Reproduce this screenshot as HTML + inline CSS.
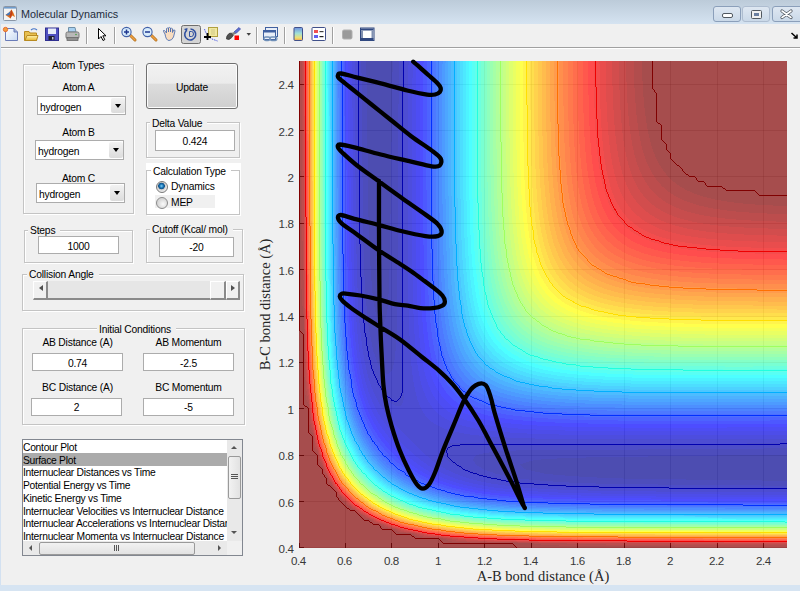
<!DOCTYPE html>
<html><head><meta charset="utf-8">
<style>
*{box-sizing:border-box}
html,body{margin:0;padding:0}
body{width:800px;height:591px;position:relative;overflow:hidden;background:#f0f0f0;font-family:"Liberation Sans",sans-serif;color:#000}
.a{position:absolute}
#title{left:0;top:0;width:800px;height:24px;background:linear-gradient(#d3e1f1,#cbdcef 60%,#c6d9ee)}
#ttext{left:21px;top:7.5px;font-size:10.8px;color:#1e2b3b;white-space:nowrap}
#tool{left:1px;top:24px;width:799px;height:23px;background:#f0f0f0}
#sep1{left:1px;top:47px;width:799px;height:1px;background:#a0a0a0}
#sep2{left:1px;top:48px;width:799px;height:1px;background:#ffffff}
#lb{left:0;top:24px;width:1px;height:567px;background:#d3e1f1}
#bb{left:0;top:585px;width:800px;height:6px;background:#d6e4f2}
.grp{position:absolute;border:1px solid #d5dfe5;box-shadow:inset 1px 1px 0 #fff, 1px 1px 0 #fff}
.grp{border-color:#c4c4c4}
.gt{position:absolute;background:#f0f0f0;font-size:10.3px;letter-spacing:-0.2px;white-space:nowrap;padding:0 5px 0 2px;line-height:11px}
.lbl{position:absolute;font-size:10.3px;letter-spacing:-0.2px;white-space:nowrap;line-height:11px;text-align:center}
.edit{padding-top:1px;position:absolute;background:#fff;border:1px solid #acacac;border-top-color:#acacac;font-size:10.3px;letter-spacing:-0.2px;text-align:center;line-height:15px}
.pop{position:absolute;background:#fff;border:1px solid #acacac;font-size:10.3px;letter-spacing:-0.2px;line-height:19px;padding-left:2px;padding-top:1px}
.pop .arr{position:absolute;right:0px;top:1px;bottom:1px;width:14px;border-radius:2px;background:linear-gradient(#f2f2f2,#dcdcdc)}
.pop .arr:after{content:"";position:absolute;left:3.5px;top:6px;border-left:3.5px solid transparent;border-right:3.5px solid transparent;border-top:4px solid #000}
.tick{position:absolute;font-size:11.6px;letter-spacing:-0.4px;color:#383838;white-space:nowrap;line-height:11px}
</style></head><body>
<div id="title" class="a"></div>

<div id="tool" class="a"></div>
<div id="sep1" class="a"></div><div id="sep2" class="a"></div>
<div id="lb" class="a"></div>
<svg class="a" style="left:0;top:0" width="800" height="50">
<defs>
<linearGradient id="tg" x1="0" y1="0" x2="0" y2="1"><stop offset="0" stop-color="#bccbd9"/><stop offset="1" stop-color="#d5e3f1"/></linearGradient>
<linearGradient id="bg1" x1="0" y1="0" x2="0" y2="1"><stop offset="0" stop-color="#dfe8f2"/><stop offset="1" stop-color="#c9d8e8"/></linearGradient>
<linearGradient id="cb" x1="0" y1="0" x2="0" y2="1"><stop offset="0" stop-color="#6f8fe0"/><stop offset="0.45" stop-color="#9fe0d8"/><stop offset="0.8" stop-color="#f0e070"/><stop offset="1" stop-color="#f0a050"/></linearGradient>
<linearGradient id="pg" x1="0" y1="0" x2="1" y2="1"><stop offset="0" stop-color="#ffffff"/><stop offset="1" stop-color="#c8daf2"/></linearGradient>
<linearGradient id="fg" x1="0" y1="0" x2="0" y2="1"><stop offset="0" stop-color="#fff2b0"/><stop offset="1" stop-color="#e6b830"/></linearGradient>
</defs>
<rect x="0" y="0" width="800" height="24" fill="url(#tg)"/>
<!-- matlab icon -->
<rect x="3.5" y="6.5" width="13" height="14" rx="1" fill="#f4f4f4" stroke="#8a96a6"/>
<rect x="4" y="7" width="12" height="1.6" fill="#6f9ccc"/>
<path d="M5.5 15 L9 12.5 L11.5 9.5 L13.5 13 L15 17 L12 15.5 L10.5 18.5 Z" fill="#e0701c"/>
<path d="M5.5 15 L9 12.5 L10.5 11 L9.5 15.5 Z" fill="#3c78c0"/>
<path d="M11.5 9.5 L12.5 13.5 L10.5 18.5 L9.5 15.5 Z" fill="#c0401a"/>
<!-- window buttons -->
<rect x="713.5" y="6.5" width="27" height="15" rx="2.5" fill="url(#bg1)" stroke="#8b9fba"/>
<rect x="742.5" y="6.5" width="27" height="15" rx="2.5" fill="url(#bg1)" stroke="#aebdd0"/>
<rect x="772.5" y="6.5" width="30" height="15" rx="2.5" fill="url(#bg1)" stroke="#8b9fba"/>
<rect x="722.5" y="13.5" width="10" height="4" rx="1.5" fill="#fff" stroke="#505860"/>
<rect x="751.5" y="10.5" width="10" height="8" rx="1" fill="#f0f0f0" stroke="#505860"/>
<rect x="754" y="13" width="5" height="3" fill="#6a7fa0"/>
<path d="M782 11 L791 17.5 M791 11 L782 17.5" stroke="#505860" stroke-width="3.2" stroke-linecap="round"/>
<path d="M782 11 L791 17.5 M791 11 L782 17.5" stroke="#fff" stroke-width="1.6" stroke-linecap="round"/>
<!-- toolbar separators -->
<g fill="#a0a0a0"><rect x="86" y="27" width="1" height="17"/><rect x="114" y="27" width="1" height="17"/><rect x="256" y="27" width="1" height="17"/><rect x="284" y="27" width="1" height="17"/><rect x="332" y="27" width="1" height="17"/></g>
<g fill="#ffffff"><rect x="87" y="27" width="1" height="17"/><rect x="115" y="27" width="1" height="17"/><rect x="257" y="27" width="1" height="17"/><rect x="285" y="27" width="1" height="17"/><rect x="333" y="27" width="1" height="17"/></g>
<!-- new -->
<path d="M5.5 28.5 H14 L17.5 32 V40.5 H5.5 Z" fill="url(#pg)" stroke="#6a7cb8"/>
<path d="M14 28.5 V32 H17.5" fill="#9fb0d8" stroke="#6a7cb8"/>
<circle cx="5.5" cy="29.5" r="2.2" fill="#f0a040" stroke="#e85a20" stroke-width="0.8"/>
<!-- open -->
<path d="M24.5 31.5 H29 L30 33 H36.5 V40.5 H24.5 Z" fill="#e8c050" stroke="#b88a20"/>
<path d="M25 40.5 L27 35.5 H38 L36.5 40.5 Z" fill="url(#fg)" stroke="#b88a20"/>
<path d="M31 30 Q34 27.5 37 30" fill="none" stroke="#4a78c8" stroke-width="1.2"/>
<!-- save -->
<rect x="45.5" y="28" width="13" height="12.5" fill="#5050c0" stroke="#303090"/>
<rect x="48" y="28.5" width="8" height="5.5" fill="#e8ecf8"/>
<rect x="48.5" y="36" width="6" height="4" fill="#202030"/>
<rect x="52" y="37" width="1.5" height="2.5" fill="#c0c0d0"/>
<!-- print -->
<path d="M68.5 27.5 H75 L76 32 H68.5 Z" fill="#a8d0f0" stroke="#7090a8"/>
<rect x="66" y="32" width="13" height="6.5" rx="1.5" fill="#b8b8b8" stroke="#787878"/>
<rect x="67" y="37.5" width="11" height="3" fill="#909090" stroke="#686868" stroke-width="0.8"/>
<circle cx="76" cy="34.5" r="0.8" fill="#40a040"/>
<!-- pointer -->
<path d="M98.5 28.5 V39 L101 36.5 L103 40.5 L104.8 39.6 L102.8 35.8 H106 Z" fill="#fff" stroke="#000" stroke-width="1"/>
<!-- zoom in/out -->
<g>
<line x1="130.5" y1="35.5" x2="135" y2="40" stroke="#b07020" stroke-width="3" stroke-linecap="round"/>
<line x1="130.5" y1="35.5" x2="135" y2="40" stroke="#f0a040" stroke-width="1.6" stroke-linecap="round"/>
<circle cx="126.5" cy="32" r="4.6" fill="#d8ecfc" stroke="#4060a8" stroke-width="1.1"/>
<path d="M124 32 H129 M126.5 29.5 V34.5" stroke="#203890" stroke-width="1.5"/>
<line x1="151.5" y1="35.5" x2="156" y2="40" stroke="#b07020" stroke-width="3" stroke-linecap="round"/>
<line x1="151.5" y1="35.5" x2="156" y2="40" stroke="#f0a040" stroke-width="1.6" stroke-linecap="round"/>
<circle cx="147.5" cy="32" r="4.6" fill="#d8ecfc" stroke="#4060a8" stroke-width="1.1"/>
<path d="M145 32 H150" stroke="#203890" stroke-width="1.5"/>
</g>
<!-- hand -->
<path d="M165 34 L163.5 31.5 Q163 30 164.5 30.5 L166.5 33 V28.5 Q167.5 27.5 168.5 28.5 V32 V27.8 Q169.5 27 170.5 28 V32 V28.5 Q171.5 27.8 172.5 28.8 V32.5 L173.5 30 Q175 29.5 175 31 L173.5 37 Q172 40.5 169 40.5 Q166 40.5 165 34 Z" fill="#f8dcc0" stroke="#5070b0" stroke-width="0.9"/>
<!-- rotate pressed -->
<rect x="181.5" y="25.5" width="19" height="18" rx="2" fill="#d4d4d4" stroke="#6e6e6e"/>
<path d="M186 31 A5.5 5.5 0 1 0 190.5 29" fill="none" stroke="#3050a0" stroke-width="1.6"/>
<path d="M184 29 L187.5 28 L187 32 Z" fill="#3050a0"/>
<path d="M189.5 31.5 H191.5 Q193.5 31.5 193.5 34 Q193.5 36.5 191.5 36.5 H189.5 Z" fill="none" stroke="#3050a0" stroke-width="1"/>
<!-- data cursor -->
<rect x="208.5" y="27.5" width="9" height="9" fill="#f0e8a0" stroke="#b0a040"/>
<path d="M211 30 H215 M211 32 H215 M211 34 H215" stroke="#c8c080" stroke-width="0.8"/>
<path d="M204.5 29 Q206 35 212 39 L217.5 41" fill="none" stroke="#4050e0" stroke-width="1" stroke-dasharray="1.5 1"/>
<path d="M207.5 33 V40 M204 37 H211" stroke="#000" stroke-width="1.8"/>
<!-- brush -->
<path d="M234 32 L239 27.5 L240.5 29 L236 33.5 Z" fill="#6070d0" stroke="#3040a0" stroke-width="0.7"/>
<path d="M226.5 39 Q226 36 229 33.5 L231.5 33 L233.5 35 Q232 38 229 39.5 Z" fill="#505050" stroke="#303030" stroke-width="0.7"/>
<path d="M231.5 33 L234 32 L236 33.5 L233.5 35 Z" fill="#808080"/>
<rect x="234.5" y="35.5" width="4.5" height="4.5" fill="#ff0000"/>
<path d="M246.5 33 H251 L248.75 35.8 Z" fill="#404040"/>
<!-- link -->
<rect x="265.5" y="27.5" width="12" height="9" fill="#e8eef8" stroke="#4060a0"/>
<rect x="263.5" y="30.5" width="12" height="9" fill="#e8eef8" stroke="#4060a0"/>
<rect x="263.5" y="30.5" width="12" height="2" fill="#4060a0"/>
<rect x="264" y="37" width="6" height="3.5" rx="1.7" fill="none" stroke="#7090b8" stroke-width="1.3"/>
<rect x="270" y="37" width="7" height="3.5" rx="1.7" fill="none" stroke="#7090b8" stroke-width="1.3"/>
<!-- colorbar -->
<rect x="294" y="27.5" width="8.5" height="13" rx="1" fill="url(#cb)" stroke="#40508a"/>
<!-- legend -->
<rect x="312" y="27.5" width="13.5" height="13" rx="1" fill="#fff" stroke="#40508a"/>
<rect x="314" y="30" width="4" height="3" fill="#f05050"/><rect x="314" y="35" width="4" height="3" fill="#6060f0"/>
<rect x="319.5" y="31" width="4" height="1.2" fill="#404040"/><rect x="319.5" y="36" width="4" height="1.2" fill="#202020"/>
<!-- gray square -->
<rect x="342.5" y="30" width="9.5" height="9" rx="1.5" fill="#9a9a9a" stroke="#b0b0b0"/>
<!-- plot tools -->
<rect x="360.5" y="28" width="13.5" height="12.5" fill="#fff" stroke="#304880" stroke-width="1"/>
<rect x="361" y="28.5" width="12.5" height="2" fill="#304880"/>
<rect x="361" y="38" width="12.5" height="2" fill="#304880"/>
<rect x="361" y="30.5" width="2" height="7.5" fill="#8090b0"/><rect x="371.5" y="30.5" width="2" height="7.5" fill="#8090b0"/>
<!-- dock arrow -->
<path d="M791.5 33 L797 38 M797 34.5 V38 H793.5" fill="none" stroke="#000" stroke-width="1.5"/>
</svg>
<div id="ttext" class="a">Molecular Dynamics</div>


<!-- Atom types group -->
<div class="grp" style="left:23px;top:64px;width:111px;height:150px"></div>
<div class="gt" style="left:50px;top:60px">Atom Types</div>
<div class="lbl" style="left:23px;top:82px;width:111px">Atom A</div>
<div class="pop" style="left:37px;top:96px;width:89px;height:19px">hydrogen<div class="arr"></div></div>
<div class="lbl" style="left:23px;top:127px;width:111px">Atom B</div>
<div class="pop" style="left:35px;top:140px;width:89px;height:20px">hydrogen<div class="arr"></div></div>
<div class="lbl" style="left:23px;top:173px;width:111px">Atom C</div>
<div class="pop" style="left:36px;top:183px;width:89px;height:20px">hydrogen<div class="arr"></div></div>

<!-- Update button -->
<div class="a" style="left:146px;top:63px;width:92px;height:46px;border:1px solid #707070;border-radius:3px;background:linear-gradient(#f2f2f2,#ebebeb 44%,#dddddd 45%,#cfcfcf);box-shadow:inset 0 0 0 1px #fcfcfc"></div>
<div class="lbl" style="left:146px;top:82px;width:92px">Update</div>

<!-- Delta value -->
<div class="grp" style="left:146px;top:122px;width:94px;height:36px"></div>
<div class="gt" style="left:150px;top:118px">Delta Value</div>
<div class="edit" style="left:155px;top:130px;width:80px;height:21px;line-height:19px">0.424</div>

<!-- Calculation type -->
<div class="a" style="left:146px;top:163px;width:95px;height:52px;background:#fff"></div>
<div class="grp" style="left:146px;top:170px;width:94px;height:45px"></div>
<div class="gt" style="left:151px;top:166px;background:#fff">Calculation Type</div>
<div class="a" style="left:155px;top:195px;width:60px;height:13px;background:#f0f0f0"></div>
<div class="a" style="left:156px;top:181px;width:12px;height:12px;border-radius:50%;border:1px solid #7a7a7a;background:radial-gradient(circle at 45% 40%,#7fd0f8 0,#1e78b8 1.8px,#0c4f86 3px,#c8c8c8 3.6px,#e8e8e8 5px)"></div>
<div class="lbl" style="left:171px;top:181px;text-align:left">Dynamics</div>
<div class="a" style="left:156px;top:197px;width:12px;height:12px;border-radius:50%;border:1px solid #8a8a8a;background:radial-gradient(circle at 60% 60%,#fafafa 0,#d8d8d8 5px)"></div>
<div class="lbl" style="left:171px;top:197px;text-align:left">MEP</div>

<!-- Steps -->
<div class="grp" style="left:24px;top:230px;width:109px;height:33px"></div>
<div class="gt" style="left:28px;top:225px">Steps</div>
<div class="edit" style="padding-top:2px;left:38px;top:236px;width:81px;height:18px;line-height:16px">1000</div>

<!-- Cutoff -->
<div class="grp" style="left:146px;top:229px;width:97px;height:34px"></div>
<div class="gt" style="left:150px;top:224px">Cutoff (Kcal/ mol)</div>
<div class="edit" style="left:159px;top:237px;width:75px;height:20px;line-height:18px">-20</div>

<!-- Collision angle -->
<div class="grp" style="left:22px;top:274px;width:222px;height:37px"></div>
<div class="gt" style="left:27px;top:269px">Collision Angle</div>
<div class="a" style="left:33px;top:281px;width:207px;height:19px;background:#e6e6e6;border-bottom:2px solid #8a8a8a"></div>
<div class="a" style="left:33px;top:281px;width:15px;height:19px;background:#f0f0f0;border-left:1px solid #fff;border-top:1px solid #fff;border-right:2px solid #8a8a8a;border-bottom:2px solid #8a8a8a"></div>
<div class="a" style="left:38.5px;top:285px;border-top:3.5px solid transparent;border-bottom:3.5px solid transparent;border-right:4px solid #505050"></div>
<div class="a" style="left:210px;top:281px;width:16px;height:19px;background:#f0f0f0;border-left:1px solid #fff;border-top:1px solid #fff;border-right:2px solid #8a8a8a;border-bottom:2px solid #8a8a8a"></div>
<div class="a" style="left:226px;top:281px;width:14px;height:19px;background:#f0f0f0;border-left:1px solid #fff;border-top:1px solid #fff;border-right:2px solid #8a8a8a;border-bottom:2px solid #8a8a8a"></div>
<div class="a" style="left:231px;top:285px;border-top:3.5px solid transparent;border-bottom:3.5px solid transparent;border-left:4px solid #505050"></div>

<!-- Initial conditions -->
<div class="grp" style="left:22px;top:328px;width:223px;height:97px"></div>
<div class="gt" style="left:97px;top:324px">Initial Conditions</div>
<div class="lbl" style="left:32px;top:337px;width:91px">AB Distance (A)</div>
<div class="edit" style="padding-top:2px;left:32px;top:353px;width:91px;height:18px;line-height:16px">0.74</div>
<div class="lbl" style="left:32px;top:382px;width:91px">BC Distance (A)</div>
<div class="edit" style="left:31px;top:398px;width:91px;height:18px;line-height:16px">2</div>
<div class="lbl" style="left:143px;top:337px;width:91px">AB Momentum</div>
<div class="edit" style="padding-top:2px;left:143px;top:353px;width:91px;height:18px;line-height:16px">-2.5</div>
<div class="lbl" style="left:143px;top:382px;width:91px">BC Momentum</div>
<div class="edit" style="left:143px;top:398px;width:91px;height:18px;line-height:16px">-5</div>

<!-- listbox -->
<div class="a" style="left:22px;top:439px;width:221px;height:117px;background:#fff;border:1px solid #828790;overflow:hidden">
<div class="a" style="left:0;top:13px;width:204px;height:13px;background:#ababab"></div>
<div class="a" style="left:0px;top:2px;width:204px;font-size:10.3px;letter-spacing:-0.28px;line-height:12.7px;white-space:nowrap;overflow:hidden">Contour Plot<br>Surface Plot<br>Internuclear Distances vs Time<br>Potential Energy vs Time<br>Kinetic Energy vs Time<br>Internuclear Velocities vs Internuclear Distance<br>Internuclear Accelerations vs Internuclear Distance<br>Internuclear Momenta vs Internuclear Distance</div>
<div class="a" style="left:204px;top:0;width:15px;height:101px;background:#e9e9e9"></div>
<div class="a" style="left:205px;top:16px;width:13px;height:43px;border:1px solid #9a9a9a;border-radius:2px;background:linear-gradient(90deg,#f2f2f2,#e2e2e2)"></div>
<div class="a" style="left:208px;top:34px;width:7px;height:1px;background:#555;box-shadow:0 2px 0 #555,0 4px 0 #555"></div>
<div class="a" style="left:208px;top:6px;border-left:3px solid transparent;border-right:3px solid transparent;border-bottom:3px solid #555"></div>
<div class="a" style="left:208px;top:91px;border-left:3px solid transparent;border-right:3px solid transparent;border-top:3px solid #555"></div>
<div class="a" style="left:0;top:101px;width:204px;height:15px;background:#e9e9e9"></div>
<div class="a" style="left:16px;top:102px;width:156px;height:13px;border:1px solid #9a9a9a;border-radius:2px;background:linear-gradient(#f2f2f2,#e2e2e2)"></div>
<div class="a" style="left:91px;top:105px;width:1px;height:6px;background:#555;box-shadow:2px 0 0 #555,4px 0 0 #555"></div>
<div class="a" style="left:6px;top:105px;border-top:3px solid transparent;border-bottom:3px solid transparent;border-right:3px solid #555"></div>
<div class="a" style="left:195px;top:105px;border-top:3px solid transparent;border-bottom:3px solid transparent;border-left:3px solid #555"></div>
<div class="a" style="left:204px;top:101px;width:15px;height:15px;background:#f0f0f0"></div>
</div>
<!-- axis labels -->
<div class="tick" style="left:291px;top:555px">0.4</div>
<div class="tick" style="left:337px;top:555px">0.6</div>
<div class="tick" style="left:384px;top:555px">0.8</div>
<div class="tick" style="left:435px;top:555px">1</div>
<div class="tick" style="left:477px;top:555px">1.2</div>
<div class="tick" style="left:523px;top:555px">1.4</div>
<div class="tick" style="left:570px;top:555px">1.6</div>
<div class="tick" style="left:616px;top:555px">1.8</div>
<div class="tick" style="left:667px;top:555px">2</div>
<div class="tick" style="left:709px;top:555px">2.2</div>
<div class="tick" style="left:756px;top:555px">2.4</div>
<div class="tick" style="left:243.5px;width:50px;text-align:right;top:542.9px">0.4</div>
<div class="tick" style="left:243.5px;width:50px;text-align:right;top:496.5px">0.6</div>
<div class="tick" style="left:243.5px;width:50px;text-align:right;top:450.1px">0.8</div>
<div class="tick" style="left:243.5px;width:50px;text-align:right;top:403.8px">1</div>
<div class="tick" style="left:243.5px;width:50px;text-align:right;top:357.4px">1.2</div>
<div class="tick" style="left:243.5px;width:50px;text-align:right;top:311.0px">1.4</div>
<div class="tick" style="left:243.5px;width:50px;text-align:right;top:264.6px">1.6</div>
<div class="tick" style="left:243.5px;width:50px;text-align:right;top:218.2px">1.8</div>
<div class="tick" style="left:243.5px;width:50px;text-align:right;top:171.9px">2</div>
<div class="tick" style="left:243.5px;width:50px;text-align:right;top:125.5px">2.2</div>
<div class="tick" style="left:243.5px;width:50px;text-align:right;top:79.1px">2.4</div>

<div class="a" style="left:299px;top:568px;width:488px;text-align:center;font-family:'Liberation Serif',serif;font-size:14.5px;color:#262626;white-space:nowrap">A-B bond distance (&#197;)</div>
<div class="a" style="left:199px;top:296px;width:210px;text-align:center;font-family:'Liberation Serif',serif;font-size:14.5px;color:#262626;white-space:nowrap;transform:rotate(-90deg);transform-origin:50% 50%;left:160px">B-C bond distance (&#197;)</div>

<svg class="a" id="fb" style="left:299px;top:61px" width="488" height="487" shape-rendering="crispEdges"><path fill="#b43c3c" d="M0 0h6v6h-6zM0 6h6v6h-6zM0 12h6v6h-6zM0 18h6v6h-6zM0 24h6v6h-6zM0 30h6v6h-6zM0 36h6v6h-6zM0 42h6v6h-6zM0 48h6v6h-6zM0 54h6v6h-6zM0 60h6v6h-6zM0 72h6v6h-6zM0 78h6v6h-6zM0 84h6v6h-6zM0 90h6v6h-6zM0 96h6v6h-6zM0 102h6v6h-6zM0 108h6v6h-6zM0 120h6v6h-6zM0 126h6v6h-6zM0 132h6v6h-6zM0 138h6v6h-6zM0 144h6v6h-6zM0 150h6v6h-6zM0 156h6v6h-6zM0 168h6v6h-6zM0 174h6v6h-6zM0 180h6v6h-6zM0 186h6v6h-6zM0 192h6v6h-6zM0 198h6v6h-6zM12 378h6v6h-6zM18 396h6v6h-6zM102 468h6v6h-6zM132 474h12v6h-12z"/><path fill="#fc6030" d="M6 0h6v6h-6zM6 6h6v6h-6zM6 12h6v6h-6zM6 18h6v6h-6zM6 24h6v6h-6zM6 30h6v6h-6zM6 36h6v6h-6zM6 42h6v6h-6zM6 48h6v6h-6zM6 54h6v6h-6zM6 60h6v6h-6zM6 66h6v6h-6zM6 72h6v6h-6zM6 78h6v6h-6zM6 84h6v6h-6zM6 90h6v6h-6zM6 96h6v6h-6zM6 102h6v6h-6zM6 108h6v6h-6zM6 114h6v6h-6zM6 120h6v6h-6zM6 126h6v6h-6zM6 132h6v6h-6zM6 138h6v6h-6zM6 144h6v6h-6zM6 150h6v6h-6zM6 156h6v6h-6zM6 162h6v6h-6zM6 168h6v6h-6zM6 174h6v6h-6zM6 180h6v6h-6zM6 186h6v6h-6zM6 192h6v6h-6zM6 198h6v6h-6zM12 336h6v6h-6zM222 474h30v6h-30z"/><path fill="#fce448" d="M12 0h6v6h-6zM228 0h6v6h-6zM12 6h6v6h-6zM228 6h6v6h-6zM12 12h6v6h-6zM228 12h6v6h-6zM12 18h6v6h-6zM228 18h6v6h-6zM12 24h6v6h-6zM228 24h6v6h-6zM12 30h6v6h-6zM228 30h6v6h-6zM12 36h6v6h-6zM228 36h6v6h-6zM12 42h6v6h-6zM228 42h6v6h-6zM12 48h6v6h-6zM12 54h6v6h-6zM12 60h6v6h-6zM12 66h6v6h-6zM12 72h6v6h-6zM12 78h6v6h-6zM12 84h6v6h-6zM12 90h6v6h-6zM12 96h6v6h-6zM12 102h6v6h-6zM12 108h6v6h-6zM12 114h6v6h-6zM12 120h6v6h-6zM12 126h6v6h-6zM12 132h6v6h-6zM12 138h6v6h-6zM12 144h6v6h-6zM12 150h6v6h-6zM234 150h6v6h-6zM12 156h6v6h-6zM234 156h6v6h-6zM234 162h6v6h-6zM234 168h6v6h-6zM240 186h6v6h-6zM240 192h6v6h-6zM246 204h6v6h-6zM246 210h6v6h-6zM252 216h6v6h-6zM258 222h6v6h-6zM264 228h6v6h-6zM270 234h12v6h-12zM282 240h18v6h-18zM306 246h18v6h-18zM372 252h116v6h-116zM18 330h6v6h-6zM24 366h6v6h-6zM54 426h6v6h-6zM144 462h6v6h-6zM234 468h48v6h-48z"/><path fill="#a8fc90" d="M18 0h6v6h-6zM18 6h6v6h-6zM18 12h6v6h-6zM18 18h6v6h-6zM18 24h6v6h-6zM18 30h6v6h-6zM18 36h6v6h-6zM18 42h6v6h-6zM18 48h6v6h-6zM18 54h6v6h-6zM18 60h6v6h-6zM18 66h6v6h-6zM18 72h6v6h-6zM18 78h6v6h-6zM18 84h6v6h-6zM18 90h6v6h-6zM18 96h6v6h-6zM18 102h6v6h-6zM18 108h6v6h-6zM18 114h6v6h-6zM18 120h6v6h-6zM18 126h6v6h-6zM18 132h6v6h-6zM18 138h6v6h-6zM198 138h6v6h-6zM198 144h6v6h-6zM198 150h6v6h-6zM24 324h6v6h-6zM30 360h6v6h-6zM240 462h24v6h-24z"/><path fill="#54fcf0" d="M24 0h6v6h-6zM24 6h6v6h-6zM24 12h6v6h-6zM24 24h6v6h-6zM24 30h6v6h-6zM24 36h6v6h-6zM24 42h6v6h-6zM24 48h6v6h-6zM24 54h6v6h-6zM24 60h6v6h-6zM24 72h6v6h-6zM24 78h6v6h-6zM24 84h6v6h-6zM24 90h6v6h-6zM24 96h6v6h-6zM24 102h6v6h-6zM24 108h6v6h-6zM24 120h6v6h-6zM24 126h6v6h-6zM174 132h6v6h-6zM174 138h6v6h-6zM174 144h6v6h-6zM174 150h6v6h-6zM174 156h6v6h-6zM174 162h6v6h-6zM174 168h6v6h-6zM174 174h6v6h-6zM174 180h6v6h-6zM174 186h6v6h-6zM174 192h6v6h-6zM180 222h6v6h-6zM180 228h6v6h-6zM180 234h6v6h-6zM186 246h6v6h-6zM186 252h6v6h-6zM192 264h6v6h-6zM198 276h6v6h-6zM204 282h6v6h-6zM228 294h6v6h-6zM240 300h6v6h-6zM252 300h6v6h-6zM276 306h12v6h-12zM294 306h18v6h-18zM30 318h6v6h-6zM48 384h6v6h-6zM54 396h6v6h-6zM84 426h6v6h-6zM126 444h6v6h-6zM156 450h6v6h-6zM246 456h30v6h-30zM282 456h30v6h-30z"/><path fill="#3cc0fc" d="M30 0h6v6h-6zM30 6h6v6h-6zM30 12h6v6h-6zM30 18h6v6h-6zM30 24h6v6h-6zM30 30h6v6h-6zM30 36h6v6h-6zM30 42h6v6h-6zM30 48h6v6h-6zM30 54h6v6h-6zM30 60h6v6h-6zM30 66h6v6h-6zM156 180h6v6h-6zM156 186h6v6h-6zM156 192h6v6h-6zM156 198h6v6h-6zM156 204h6v6h-6zM156 210h6v6h-6zM156 216h6v6h-6zM156 222h6v6h-6zM156 228h6v6h-6zM162 252h6v6h-6zM162 258h6v6h-6zM162 264h6v6h-6zM168 276h6v6h-6zM174 288h6v6h-6zM36 306h6v6h-6zM192 306h6v6h-6zM36 312h6v6h-6zM204 312h6v6h-6zM216 318h18v6h-18zM240 324h42v6h-42zM42 342h6v6h-6zM48 366h6v6h-6zM54 378h6v6h-6zM60 390h6v6h-6zM66 396h6v6h-6zM90 420h6v6h-6zM102 426h6v6h-6zM114 432h6v6h-6zM132 438h6v6h-6zM162 444h12v6h-12zM264 450h132v6h-132z"/><path fill="#4890fc" d="M36 0h6v6h-6zM138 0h6v6h-6zM36 6h6v6h-6zM138 6h6v6h-6zM36 12h6v6h-6zM138 12h6v6h-6zM36 18h6v6h-6zM138 18h6v6h-6zM36 24h6v6h-6zM138 24h6v6h-6zM36 30h6v6h-6zM138 30h6v6h-6zM36 36h6v6h-6zM138 36h6v6h-6zM36 42h6v6h-6zM138 42h6v6h-6zM36 48h6v6h-6zM138 48h6v6h-6zM36 54h6v6h-6zM138 54h6v6h-6zM36 60h6v6h-6zM138 60h6v6h-6zM36 66h6v6h-6zM138 66h6v6h-6zM36 72h6v6h-6zM138 72h6v6h-6zM36 78h6v6h-6zM138 78h6v6h-6zM36 84h6v6h-6zM138 84h6v6h-6zM36 90h6v6h-6zM138 90h6v6h-6zM36 96h6v6h-6zM138 96h6v6h-6zM36 102h6v6h-6zM138 102h6v6h-6zM36 108h6v6h-6zM138 108h6v6h-6zM36 114h6v6h-6zM138 114h6v6h-6zM36 120h6v6h-6zM138 120h6v6h-6zM36 126h6v6h-6zM138 126h6v6h-6zM36 132h6v6h-6zM138 132h6v6h-6zM36 138h6v6h-6zM138 138h6v6h-6zM36 144h6v6h-6zM36 150h6v6h-6zM36 156h6v6h-6zM36 162h6v6h-6zM36 168h6v6h-6zM36 174h6v6h-6zM36 180h6v6h-6zM36 186h6v6h-6zM36 192h6v6h-6zM144 234h6v6h-6zM144 240h6v6h-6zM144 246h6v6h-6zM144 252h6v6h-6zM144 258h6v6h-6zM150 276h6v6h-6zM150 282h6v6h-6zM156 294h6v6h-6zM42 306h6v6h-6zM162 306h6v6h-6zM42 312h6v6h-6zM168 312h6v6h-6zM174 318h6v6h-6zM180 324h12v6h-12zM192 330h18v6h-18zM48 336h6v6h-6zM216 336h24v6h-24zM48 342h6v6h-6zM282 342h206v6h-206zM54 360h6v6h-6zM60 372h6v6h-6zM66 384h6v6h-6zM72 390h6v6h-6zM90 408h6v6h-6zM96 414h6v6h-6zM108 420h6v6h-6zM120 426h6v6h-6zM138 432h6v6h-6zM162 438h12v6h-12zM240 444h66v6h-66z"/><path fill="#3c54fc" d="M42 0h6v6h-6zM42 6h6v6h-6zM42 12h6v6h-6zM42 18h6v6h-6zM42 24h6v6h-6zM42 30h6v6h-6zM42 36h6v6h-6zM42 42h6v6h-6zM42 48h6v6h-6zM42 54h6v6h-6zM42 60h6v6h-6zM42 66h6v6h-6zM42 72h6v6h-6zM42 78h6v6h-6zM42 84h6v6h-6zM42 90h6v6h-6zM42 96h6v6h-6zM42 102h6v6h-6zM42 108h6v6h-6zM42 114h6v6h-6zM42 120h6v6h-6zM42 126h6v6h-6zM42 132h6v6h-6zM42 138h6v6h-6zM42 144h6v6h-6zM42 150h6v6h-6zM42 156h6v6h-6zM42 162h6v6h-6zM48 294h6v6h-6zM48 300h6v6h-6zM180 432h6v6h-6zM252 438h162v6h-162z"/><path fill="#4848f0" d="M48 0h6v6h-6zM114 0h6v6h-6zM48 6h6v6h-6zM114 6h6v6h-6zM48 12h6v6h-6zM114 12h6v6h-6zM48 18h6v6h-6zM114 18h6v6h-6zM48 24h6v6h-6zM114 24h6v6h-6zM48 30h6v6h-6zM114 30h6v6h-6zM48 36h6v6h-6zM114 36h6v6h-6zM48 42h6v6h-6zM114 42h6v6h-6zM48 48h6v6h-6zM114 48h6v6h-6zM48 54h6v6h-6zM114 54h6v6h-6zM48 60h6v6h-6zM114 60h6v6h-6zM48 66h6v6h-6zM114 66h6v6h-6zM48 72h6v6h-6zM114 72h6v6h-6zM48 78h6v6h-6zM114 78h6v6h-6zM48 84h6v6h-6zM114 84h6v6h-6zM48 90h6v6h-6zM114 90h6v6h-6zM48 96h6v6h-6zM114 96h6v6h-6zM48 102h6v6h-6zM114 102h6v6h-6zM48 108h6v6h-6zM114 108h6v6h-6zM48 114h6v6h-6zM114 114h6v6h-6zM48 120h6v6h-6zM114 120h6v6h-6zM48 126h6v6h-6zM114 126h6v6h-6zM48 132h6v6h-6zM114 132h6v6h-6zM48 138h6v6h-6zM114 138h6v6h-6zM48 144h6v6h-6zM114 144h6v6h-6zM48 150h6v6h-6zM114 150h6v6h-6zM48 156h6v6h-6zM114 156h6v6h-6zM48 162h6v6h-6zM114 162h6v6h-6zM48 168h6v6h-6zM114 168h6v6h-6zM48 174h6v6h-6zM114 174h6v6h-6zM48 180h6v6h-6zM114 180h6v6h-6zM48 186h6v6h-6zM114 186h6v6h-6zM48 192h6v6h-6zM114 192h6v6h-6zM48 198h6v6h-6zM114 198h6v6h-6zM48 204h6v6h-6zM114 204h6v6h-6zM114 210h6v6h-6zM114 216h6v6h-6zM114 222h6v6h-6zM114 228h6v6h-6zM114 234h6v6h-6zM114 240h6v6h-6zM114 246h6v6h-6zM54 276h6v6h-6zM120 276h6v6h-6zM54 282h6v6h-6zM120 282h6v6h-6zM54 288h6v6h-6zM120 288h6v6h-6zM54 294h6v6h-6zM120 294h6v6h-6zM120 300h6v6h-6zM120 306h6v6h-6zM60 312h6v6h-6zM126 312h6v6h-6zM60 318h6v6h-6zM126 318h6v6h-6zM60 324h6v6h-6zM126 324h12v6h-12zM132 330h6v6h-6zM66 336h6v6h-6zM132 336h12v6h-12zM66 342h6v6h-6zM144 342h6v6h-6zM72 348h6v6h-6zM144 348h18v6h-18zM72 354h6v6h-6zM156 354h18v6h-18zM78 360h6v6h-6zM174 360h24v6h-24zM78 366h12v6h-12zM210 366h278v6h-278zM84 372h6v6h-6zM90 378h6v6h-6zM96 384h6v6h-6zM102 390h6v6h-6zM108 396h6v6h-6zM114 402h12v6h-12zM126 408h12v6h-12zM138 414h12v6h-12zM156 420h12v6h-12zM180 426h24v6h-24zM246 432h120v6h-120zM372 432h42v6h-42z"/><path fill="#3c3ccc" d="M54 0h6v6h-6zM102 0h6v6h-6zM54 6h6v6h-6zM102 6h6v6h-6zM54 12h6v6h-6zM102 12h6v6h-6zM54 18h6v6h-6zM102 18h6v6h-6zM54 24h6v6h-6zM102 24h6v6h-6zM54 30h6v6h-6zM102 30h6v6h-6zM54 36h6v6h-6zM102 36h6v6h-6zM54 42h6v6h-6zM102 42h6v6h-6zM54 48h6v6h-6zM102 48h6v6h-6zM54 54h6v6h-6zM102 54h6v6h-6zM54 60h6v6h-6zM102 60h6v6h-6zM54 66h6v6h-6zM102 66h6v6h-6zM54 72h6v6h-6zM102 72h6v6h-6zM54 78h6v6h-6zM102 78h6v6h-6zM54 84h6v6h-6zM102 84h6v6h-6zM54 90h6v6h-6zM102 90h6v6h-6zM54 96h6v6h-6zM102 96h6v6h-6zM102 102h6v6h-6zM102 108h6v6h-6zM102 114h6v6h-6zM102 120h6v6h-6zM102 126h6v6h-6zM102 132h6v6h-6zM102 138h6v6h-6zM102 144h6v6h-6zM102 150h6v6h-6zM102 156h6v6h-6zM102 162h6v6h-6zM102 168h6v6h-6zM102 174h6v6h-6zM102 180h6v6h-6zM102 186h6v6h-6zM102 192h6v6h-6zM102 198h6v6h-6zM102 204h6v6h-6zM102 210h6v6h-6zM102 216h6v6h-6zM60 222h6v6h-6zM102 222h6v6h-6zM60 228h6v6h-6zM102 228h6v6h-6zM60 234h6v6h-6zM102 234h6v6h-6zM60 240h6v6h-6zM102 240h6v6h-6zM60 246h6v6h-6zM102 246h6v6h-6zM60 252h6v6h-6zM102 252h6v6h-6zM60 258h6v6h-6zM102 258h6v6h-6zM60 264h6v6h-6zM102 264h6v6h-6zM102 270h6v6h-6zM102 276h6v6h-6zM102 282h6v6h-6zM66 288h6v6h-6zM102 288h6v6h-6zM66 294h6v6h-6zM102 294h6v6h-6zM102 300h6v6h-6zM102 306h6v6h-6zM72 312h6v6h-6zM102 312h6v6h-6zM102 318h6v6h-6zM78 324h6v6h-6zM102 324h6v6h-6zM162 378h326v6h-326zM156 402h6v6h-6zM168 408h6v6h-6zM180 414h12v6h-12zM210 420h36v6h-36zM300 426h188v6h-188z"/><path fill="#4848c0" d="M60 0h6v6h-6zM96 0h6v6h-6zM60 6h6v6h-6zM96 6h6v6h-6zM60 12h6v6h-6zM96 12h6v6h-6zM60 18h6v6h-6zM96 18h6v6h-6zM60 24h6v6h-6zM96 24h6v6h-6zM60 30h6v6h-6zM96 30h6v6h-6zM60 36h6v6h-6zM96 36h6v6h-6zM60 42h6v6h-6zM96 42h6v6h-6zM60 48h6v6h-6zM96 48h6v6h-6zM60 54h6v6h-6zM96 54h6v6h-6zM60 60h6v6h-6zM96 60h6v6h-6zM60 66h6v6h-6zM96 66h6v6h-6zM60 72h6v6h-6zM96 72h6v6h-6zM60 78h6v6h-6zM96 78h6v6h-6zM60 84h6v6h-6zM96 84h6v6h-6zM60 90h6v6h-6zM96 90h6v6h-6zM60 96h6v6h-6zM96 96h6v6h-6zM60 102h6v6h-6zM96 102h6v6h-6zM96 108h6v6h-6zM96 114h6v6h-6zM96 120h6v6h-6zM96 126h6v6h-6zM96 132h6v6h-6zM96 138h6v6h-6zM96 144h6v6h-6zM96 150h6v6h-6zM96 156h6v6h-6zM96 162h6v6h-6zM96 168h6v6h-6zM96 174h6v6h-6zM96 180h6v6h-6zM66 186h6v6h-6zM96 186h6v6h-6zM66 192h6v6h-6zM96 192h6v6h-6zM66 198h6v6h-6zM96 198h6v6h-6zM66 204h6v6h-6zM96 204h6v6h-6zM66 210h6v6h-6zM90 210h12v6h-12zM66 216h6v6h-6zM90 216h12v6h-12zM66 222h6v6h-6zM90 222h12v6h-12zM66 228h6v6h-6zM90 228h12v6h-12zM66 234h6v6h-6zM90 234h12v6h-12zM66 240h6v6h-6zM90 240h12v6h-12zM66 246h6v6h-6zM90 246h12v6h-12zM66 252h6v6h-6zM96 252h6v6h-6zM66 258h12v6h-12zM90 258h12v6h-12zM66 264h36v6h-36zM66 270h36v6h-36zM72 276h30v6h-30zM72 282h30v6h-30zM72 288h24v6h-24zM72 294h24v6h-24zM72 300h30v6h-30zM78 306h18v6h-18zM90 312h6v6h-6zM78 318h6v6h-6zM90 318h6v6h-6zM90 324h6v6h-6zM84 330h12v6h-12zM144 384h6v6h-6zM156 384h6v6h-6zM180 384h6v6h-6zM216 384h272v6h-272zM150 390h78v6h-78zM234 390h42v6h-42zM282 390h42v6h-42zM330 390h18v6h-18zM174 396h54v6h-54zM162 402h6v6h-6zM174 402h48v6h-48zM180 408h48v6h-48zM204 414h72v6h-72zM300 420h188v6h-188z"/><path fill="#4848b4" d="M66 0h30v6h-30zM66 6h30v6h-30zM66 12h30v6h-30zM66 18h30v6h-30zM66 24h30v6h-30zM66 30h30v6h-30zM66 36h30v6h-30zM66 42h30v6h-30zM66 48h30v6h-30zM66 54h30v6h-30zM66 60h30v6h-30zM66 66h30v6h-30zM66 72h30v6h-30zM66 78h30v6h-30zM66 84h30v6h-30zM66 90h30v6h-30zM66 96h30v6h-30zM66 102h30v6h-30zM66 108h30v6h-30zM66 114h30v6h-30zM66 120h30v6h-30zM66 126h30v6h-30zM66 132h30v6h-30zM66 138h30v6h-30zM66 144h30v6h-30zM66 150h30v6h-30zM66 156h30v6h-30zM66 162h30v6h-30zM66 168h30v6h-30zM66 174h30v6h-30zM66 180h30v6h-30zM72 186h24v6h-24zM72 192h24v6h-24zM72 198h24v6h-24zM72 204h24v6h-24zM72 210h18v6h-18zM72 216h18v6h-18zM72 222h18v6h-18zM72 228h18v6h-18zM72 234h18v6h-18zM72 240h18v6h-18zM72 246h18v6h-18zM72 252h24v6h-24zM78 258h12v6h-12zM228 390h6v6h-6zM276 390h6v6h-6zM324 390h6v6h-6zM348 390h140v6h-140zM228 396h260v6h-260zM222 402h266v6h-266zM228 408h260v6h-260zM276 414h212v6h-212z"/><path fill="#4848d8" d="M108 0h6v6h-6zM108 6h6v6h-6zM108 12h6v6h-6zM108 18h6v6h-6zM108 24h6v6h-6zM108 30h6v6h-6zM108 36h6v6h-6zM108 42h6v6h-6zM108 48h6v6h-6zM108 54h6v6h-6zM108 60h6v6h-6zM108 66h6v6h-6zM108 72h6v6h-6zM108 78h6v6h-6zM108 84h6v6h-6zM108 90h6v6h-6zM108 96h6v6h-6zM54 102h6v6h-6zM108 102h6v6h-6zM54 108h6v6h-6zM108 108h6v6h-6zM54 114h6v6h-6zM108 114h6v6h-6zM54 120h6v6h-6zM108 120h6v6h-6zM54 126h6v6h-6zM108 126h6v6h-6zM54 132h6v6h-6zM108 132h6v6h-6zM54 138h6v6h-6zM108 138h6v6h-6zM54 144h6v6h-6zM108 144h6v6h-6zM54 150h6v6h-6zM108 150h6v6h-6zM54 156h6v6h-6zM108 156h6v6h-6zM54 162h6v6h-6zM108 162h6v6h-6zM54 168h6v6h-6zM108 168h6v6h-6zM54 174h6v6h-6zM108 174h6v6h-6zM54 180h6v6h-6zM108 180h6v6h-6zM54 186h6v6h-6zM108 186h6v6h-6zM54 192h6v6h-6zM108 192h6v6h-6zM54 198h6v6h-6zM108 198h6v6h-6zM54 204h6v6h-6zM108 204h6v6h-6zM54 210h6v6h-6zM108 210h6v6h-6zM54 216h6v6h-6zM108 216h6v6h-6zM54 222h6v6h-6zM108 222h6v6h-6zM108 228h6v6h-6zM108 234h6v6h-6zM108 240h6v6h-6zM108 246h6v6h-6zM108 252h6v6h-6zM108 258h6v6h-6zM108 264h6v6h-6zM60 270h6v6h-6zM108 270h6v6h-6zM60 276h6v6h-6zM108 276h6v6h-6zM60 282h6v6h-6zM108 282h6v6h-6zM60 288h6v6h-6zM108 288h6v6h-6zM108 294h6v6h-6zM108 300h6v6h-6zM66 306h6v6h-6zM108 306h6v6h-6zM66 312h6v6h-6zM108 312h12v6h-12zM66 318h6v6h-6zM108 318h12v6h-12zM72 324h6v6h-6zM108 324h12v6h-12zM72 330h6v6h-6zM108 330h12v6h-12zM78 336h6v6h-6zM108 336h18v6h-18zM78 342h6v6h-6zM120 342h12v6h-12zM84 348h6v6h-6zM96 348h36v6h-36zM84 354h60v6h-60zM90 360h60v6h-60zM96 366h42v6h-42zM144 366h24v6h-24zM102 372h36v6h-36zM144 372h90v6h-90zM108 378h30v6h-30zM114 384h24v6h-24zM120 390h6v6h-6zM126 396h12v6h-12zM138 402h12v6h-12zM144 408h18v6h-18zM162 414h18v6h-18zM186 420h18v6h-18zM240 426h60v6h-60z"/><path fill="#4854fc" d="M120 0h6v6h-6zM120 6h6v6h-6zM120 12h6v6h-6zM120 18h6v6h-6zM120 24h6v6h-6zM120 30h6v6h-6zM120 36h6v6h-6zM120 42h6v6h-6zM120 48h6v6h-6zM120 54h6v6h-6zM120 60h6v6h-6zM120 66h6v6h-6zM120 72h6v6h-6zM120 78h6v6h-6zM120 84h6v6h-6zM120 90h6v6h-6zM120 96h6v6h-6zM120 102h6v6h-6zM120 108h6v6h-6zM120 114h6v6h-6zM120 120h6v6h-6zM120 126h6v6h-6zM120 132h6v6h-6zM120 138h6v6h-6zM120 144h6v6h-6zM120 150h6v6h-6zM120 156h6v6h-6zM120 162h6v6h-6zM120 168h6v6h-6zM120 174h6v6h-6zM120 180h6v6h-6zM120 186h6v6h-6zM120 192h6v6h-6zM120 198h6v6h-6zM48 210h6v6h-6zM120 210h6v6h-6zM48 216h6v6h-6zM120 216h6v6h-6zM48 222h6v6h-6zM48 228h6v6h-6zM48 234h6v6h-6zM48 240h6v6h-6zM48 246h6v6h-6zM126 246h6v6h-6zM48 252h6v6h-6zM126 252h6v6h-6zM48 258h6v6h-6zM126 258h6v6h-6zM48 264h6v6h-6zM126 264h6v6h-6zM48 270h6v6h-6zM126 270h6v6h-6zM48 276h6v6h-6zM126 276h6v6h-6zM48 282h6v6h-6zM126 282h6v6h-6zM48 288h6v6h-6zM126 288h6v6h-6zM132 294h6v6h-6zM132 300h6v6h-6zM54 306h6v6h-6zM132 306h6v6h-6zM54 312h6v6h-6zM138 312h6v6h-6zM54 318h6v6h-6zM138 318h6v6h-6zM144 324h6v6h-6zM144 330h12v6h-12zM60 336h6v6h-6zM150 336h12v6h-12zM60 342h6v6h-6zM162 342h12v6h-12zM168 348h18v6h-18zM66 354h6v6h-6zM192 354h30v6h-30zM240 360h248v6h-248zM72 366h6v6h-6zM78 372h6v6h-6zM78 378h6v6h-6zM84 384h6v6h-6zM90 390h6v6h-6zM96 396h6v6h-6zM102 402h12v6h-12zM114 408h6v6h-6zM126 414h6v6h-6zM138 420h12v6h-12zM156 426h18v6h-18zM186 432h42v6h-42zM234 432h12v6h-12zM444 438h44v6h-44z"/><path fill="#4860fc" d="M126 0h6v6h-6zM126 6h6v6h-6zM126 12h6v6h-6zM126 18h6v6h-6zM126 24h6v6h-6zM126 30h6v6h-6zM126 36h6v6h-6zM126 42h6v6h-6zM126 48h6v6h-6zM126 54h6v6h-6zM126 60h6v6h-6zM126 66h6v6h-6zM126 72h6v6h-6zM126 78h6v6h-6zM126 84h6v6h-6zM126 90h6v6h-6zM126 96h6v6h-6zM126 102h6v6h-6zM126 108h6v6h-6zM126 114h6v6h-6zM126 120h6v6h-6zM126 126h6v6h-6zM126 132h6v6h-6zM126 138h6v6h-6zM126 144h6v6h-6zM126 150h6v6h-6zM126 156h6v6h-6zM126 162h6v6h-6zM126 168h6v6h-6zM126 174h6v6h-6zM126 180h6v6h-6zM126 186h6v6h-6zM126 192h6v6h-6zM126 198h6v6h-6zM126 204h6v6h-6zM126 210h6v6h-6zM126 216h6v6h-6zM126 222h6v6h-6zM126 228h6v6h-6zM126 234h6v6h-6zM126 240h6v6h-6zM132 264h6v6h-6zM132 270h6v6h-6zM132 276h6v6h-6zM132 282h6v6h-6zM132 288h6v6h-6zM138 294h6v6h-6zM138 300h6v6h-6zM138 306h12v6h-12zM144 312h6v6h-6zM144 318h12v6h-12zM54 324h6v6h-6zM150 324h12v6h-12zM54 330h6v6h-6zM156 330h12v6h-12zM162 336h12v6h-12zM174 342h12v6h-12zM60 348h6v6h-6zM186 348h30v6h-30zM222 354h72v6h-72zM66 360h6v6h-6zM72 372h6v6h-6zM78 384h6v6h-6zM84 390h6v6h-6zM90 396h6v6h-6zM96 402h6v6h-6zM108 408h6v6h-6zM114 414h12v6h-12zM132 420h6v6h-6zM150 426h6v6h-6z"/><path fill="#3c6cfc" d="M132 0h6v6h-6zM132 6h6v6h-6zM132 12h6v6h-6zM132 18h6v6h-6zM132 24h6v6h-6zM132 30h6v6h-6zM132 36h6v6h-6zM132 42h6v6h-6zM132 48h6v6h-6zM132 54h6v6h-6zM132 60h6v6h-6zM132 66h6v6h-6zM132 72h6v6h-6zM132 78h6v6h-6zM132 84h6v6h-6zM132 90h6v6h-6zM132 96h6v6h-6zM132 102h6v6h-6zM132 108h6v6h-6zM132 114h6v6h-6zM132 120h6v6h-6zM132 126h6v6h-6zM132 132h6v6h-6zM132 138h6v6h-6zM132 144h6v6h-6zM132 150h6v6h-6zM132 156h6v6h-6zM132 162h6v6h-6zM132 168h6v6h-6zM132 174h6v6h-6zM132 180h6v6h-6zM132 186h6v6h-6zM132 192h6v6h-6zM132 198h6v6h-6zM132 204h6v6h-6zM132 210h6v6h-6zM132 216h6v6h-6zM42 258h6v6h-6zM42 264h6v6h-6zM42 270h6v6h-6zM138 270h6v6h-6zM42 276h6v6h-6zM138 276h6v6h-6zM48 318h6v6h-6zM48 324h6v6h-6zM180 336h6v6h-6zM54 342h6v6h-6zM204 342h6v6h-6zM240 348h48v6h-48zM60 360h6v6h-6zM108 414h6v6h-6zM120 420h6v6h-6zM156 432h6v6h-6zM192 438h24v6h-24z"/><path fill="#48a8fc" d="M144 0h6v6h-6zM144 6h6v6h-6zM144 12h6v6h-6zM144 18h6v6h-6zM144 24h6v6h-6zM144 30h6v6h-6zM144 36h6v6h-6zM144 42h6v6h-6zM144 48h6v6h-6zM144 54h6v6h-6zM144 60h6v6h-6zM144 66h6v6h-6zM144 72h6v6h-6zM144 78h6v6h-6zM144 84h6v6h-6zM144 90h6v6h-6zM144 96h6v6h-6zM144 102h6v6h-6zM144 108h6v6h-6zM144 114h6v6h-6zM144 120h6v6h-6zM144 126h6v6h-6zM144 132h6v6h-6zM150 222h6v6h-6zM150 228h6v6h-6zM150 234h6v6h-6zM150 240h6v6h-6zM150 246h6v6h-6zM36 258h6v6h-6zM36 264h6v6h-6zM156 264h6v6h-6zM36 270h6v6h-6zM156 270h6v6h-6zM156 276h6v6h-6zM162 282h6v6h-6zM162 288h6v6h-6zM168 294h6v6h-6zM168 300h6v6h-6zM174 306h6v6h-6zM180 312h6v6h-6zM192 318h6v6h-6zM42 324h6v6h-6zM204 324h12v6h-12zM42 330h6v6h-6zM228 330h24v6h-24zM288 336h200v6h-200zM48 354h6v6h-6zM66 390h6v6h-6zM72 396h6v6h-6zM90 414h6v6h-6zM108 426h6v6h-6zM126 432h6v6h-6zM150 438h6v6h-6zM198 444h12v6h-12z"/><path fill="#3cb4fc" d="M150 0h6v6h-6zM150 6h6v6h-6zM150 12h6v6h-6zM150 18h6v6h-6zM150 24h6v6h-6zM150 30h6v6h-6zM150 36h6v6h-6zM150 42h6v6h-6zM150 48h6v6h-6zM150 54h6v6h-6zM150 60h6v6h-6zM150 66h6v6h-6zM150 72h6v6h-6zM150 78h6v6h-6zM150 84h6v6h-6zM150 90h6v6h-6zM150 96h6v6h-6zM150 102h6v6h-6zM150 108h6v6h-6zM150 114h6v6h-6zM150 120h6v6h-6zM150 126h6v6h-6zM150 132h6v6h-6zM150 138h6v6h-6zM156 234h6v6h-6zM36 288h6v6h-6zM36 294h6v6h-6zM36 300h6v6h-6zM300 330h188v6h-188zM42 336h6v6h-6zM48 360h6v6h-6zM120 432h6v6h-6zM138 438h6v6h-6zM174 444h12v6h-12zM396 450h92v6h-92z"/><path fill="#48ccfc" d="M156 0h6v6h-6zM156 6h6v6h-6zM156 12h6v6h-6zM156 18h6v6h-6zM156 24h6v6h-6zM156 30h6v6h-6zM156 36h6v6h-6zM156 42h6v6h-6zM156 48h6v6h-6zM156 54h6v6h-6zM156 60h6v6h-6zM156 66h6v6h-6zM156 72h6v6h-6zM156 78h6v6h-6zM156 84h6v6h-6zM156 90h6v6h-6zM156 96h6v6h-6zM156 102h6v6h-6zM156 108h6v6h-6zM156 114h6v6h-6zM156 120h6v6h-6zM156 126h6v6h-6zM156 132h6v6h-6zM156 138h6v6h-6zM156 144h6v6h-6zM162 234h6v6h-6zM162 240h6v6h-6zM168 264h6v6h-6zM168 270h6v6h-6zM174 282h6v6h-6zM180 288h6v6h-6zM192 300h6v6h-6zM198 306h6v6h-6zM210 312h12v6h-12zM234 318h12v6h-12zM294 324h36v6h-36z"/><path fill="#48e4fc" d="M162 0h6v6h-6zM162 6h6v6h-6zM162 12h6v6h-6zM162 18h6v6h-6zM162 24h6v6h-6zM162 30h6v6h-6zM162 36h6v6h-6zM162 42h6v6h-6zM162 48h6v6h-6zM162 54h6v6h-6zM162 60h6v6h-6zM162 66h6v6h-6zM162 72h6v6h-6zM162 78h6v6h-6zM162 84h6v6h-6zM162 90h6v6h-6zM162 96h6v6h-6zM162 102h6v6h-6zM162 108h6v6h-6zM162 114h6v6h-6zM162 120h6v6h-6zM162 126h6v6h-6zM162 132h6v6h-6zM162 138h6v6h-6zM162 144h6v6h-6zM162 150h6v6h-6zM162 156h6v6h-6zM162 162h6v6h-6zM162 168h6v6h-6zM162 174h6v6h-6zM162 180h6v6h-6zM162 186h6v6h-6zM162 192h6v6h-6zM168 228h6v6h-6zM168 234h6v6h-6zM168 240h6v6h-6zM174 258h6v6h-6zM174 264h6v6h-6zM30 270h6v6h-6zM180 270h6v6h-6zM30 276h6v6h-6zM180 276h6v6h-6zM186 282h6v6h-6zM192 288h6v6h-6zM198 294h6v6h-6zM204 300h12v6h-12zM216 306h12v6h-12zM234 312h18v6h-18zM270 318h66v6h-66zM366 318h6v6h-6zM414 318h6v6h-6zM462 318h6v6h-6zM36 330h6v6h-6zM42 360h6v6h-6zM60 396h6v6h-6zM84 420h6v6h-6zM120 438h6v6h-6zM144 444h6v6h-6zM192 450h12v6h-12z"/><path fill="#54fcfc" d="M168 0h6v6h-6zM168 6h6v6h-6zM168 12h6v6h-6zM168 24h6v6h-6zM168 30h6v6h-6zM168 36h6v6h-6zM168 42h6v6h-6zM168 48h6v6h-6zM168 54h6v6h-6zM168 60h6v6h-6zM168 72h6v6h-6zM168 78h6v6h-6zM168 84h6v6h-6zM168 90h6v6h-6zM168 96h6v6h-6zM168 102h6v6h-6zM168 108h6v6h-6zM168 120h6v6h-6zM168 126h6v6h-6zM168 132h6v6h-6zM174 198h6v6h-6zM174 204h6v6h-6zM174 210h6v6h-6zM174 216h6v6h-6zM174 222h6v6h-6zM180 240h6v6h-6zM180 246h6v6h-6zM186 258h6v6h-6zM186 264h6v6h-6zM192 270h6v6h-6zM198 282h6v6h-6zM210 288h6v6h-6zM216 294h12v6h-12zM234 300h6v6h-6zM252 306h24v6h-24zM306 312h18v6h-18zM330 312h158v6h-158zM60 402h6v6h-6zM78 420h6v6h-6zM96 432h6v6h-6z"/><path fill="#54fce4" d="M174 0h6v6h-6zM174 6h6v6h-6zM174 12h6v6h-6zM24 18h6v6h-6zM174 18h6v6h-6zM174 24h6v6h-6zM174 30h6v6h-6zM174 36h6v6h-6zM174 42h6v6h-6zM174 48h6v6h-6zM174 54h6v6h-6zM174 60h6v6h-6zM24 66h6v6h-6zM174 66h6v6h-6zM174 72h6v6h-6zM174 78h6v6h-6zM174 84h6v6h-6zM174 90h6v6h-6zM174 96h6v6h-6zM174 102h6v6h-6zM174 108h6v6h-6zM24 114h6v6h-6zM174 114h6v6h-6zM174 120h6v6h-6zM174 126h6v6h-6zM24 132h6v6h-6zM24 138h6v6h-6zM24 144h6v6h-6zM24 150h6v6h-6zM24 156h6v6h-6zM24 162h6v6h-6zM24 168h6v6h-6zM24 174h6v6h-6zM24 180h6v6h-6zM24 186h6v6h-6zM24 192h6v6h-6zM24 198h6v6h-6zM24 204h6v6h-6zM180 204h6v6h-6zM24 210h6v6h-6zM180 210h6v6h-6zM180 216h6v6h-6zM192 258h6v6h-6zM198 270h6v6h-6zM204 276h6v6h-6zM234 294h6v6h-6zM258 300h12v6h-12zM312 306h108v6h-108zM450 306h38v6h-38zM30 324h6v6h-6zM36 354h6v6h-6zM90 432h6v6h-6zM150 450h6v6h-6zM228 456h18v6h-18z"/><path fill="#78fcd8" d="M180 0h6v6h-6zM180 6h6v6h-6zM180 12h6v6h-6zM180 24h6v6h-6zM180 30h6v6h-6zM180 36h6v6h-6zM180 42h6v6h-6zM180 48h6v6h-6zM180 54h6v6h-6zM180 60h6v6h-6zM180 72h6v6h-6zM180 78h6v6h-6zM180 84h6v6h-6zM180 90h6v6h-6zM180 96h6v6h-6zM180 102h6v6h-6zM180 108h6v6h-6zM180 120h6v6h-6zM180 126h6v6h-6zM180 132h6v6h-6zM180 138h6v6h-6zM180 144h6v6h-6zM180 150h6v6h-6zM180 156h6v6h-6zM186 210h6v6h-6zM186 216h6v6h-6zM186 222h6v6h-6zM192 240h6v6h-6zM198 258h6v6h-6zM204 264h6v6h-6zM210 270h6v6h-6zM216 276h6v6h-6zM222 282h6v6h-6zM234 288h12v6h-12zM258 294h12v6h-12zM300 300h24v6h-24zM330 300h12v6h-12z"/><path fill="#90fcc0" d="M186 0h6v6h-6zM186 6h6v6h-6zM186 12h6v6h-6zM186 18h6v6h-6zM186 24h6v6h-6zM186 30h6v6h-6zM186 36h6v6h-6zM186 42h6v6h-6zM186 48h6v6h-6zM186 54h6v6h-6zM186 60h6v6h-6zM186 66h6v6h-6zM186 72h6v6h-6zM186 78h6v6h-6zM186 84h6v6h-6zM186 90h6v6h-6zM186 96h6v6h-6zM186 102h6v6h-6zM186 108h6v6h-6zM192 198h6v6h-6zM192 204h6v6h-6zM192 210h6v6h-6zM198 234h6v6h-6zM204 246h6v6h-6zM210 258h6v6h-6zM216 264h6v6h-6zM222 270h6v6h-6zM246 282h6v6h-6zM264 288h12v6h-12zM324 294h42v6h-42zM372 294h42v6h-42zM420 294h42v6h-42zM468 294h20v6h-20zM60 414h6v6h-6zM66 420h6v6h-6zM108 444h6v6h-6z"/><path fill="#a8fca8" d="M192 0h6v6h-6zM192 6h6v6h-6zM192 12h6v6h-6zM192 18h6v6h-6zM192 24h6v6h-6zM192 30h6v6h-6zM192 36h6v6h-6zM192 42h6v6h-6zM192 48h6v6h-6zM192 54h6v6h-6zM192 60h6v6h-6zM192 66h6v6h-6zM192 72h6v6h-6zM192 78h6v6h-6zM192 84h6v6h-6zM192 90h6v6h-6zM192 96h6v6h-6zM198 186h6v6h-6zM198 192h6v6h-6zM198 198h6v6h-6zM204 222h6v6h-6zM210 240h6v6h-6zM222 258h6v6h-6zM240 270h6v6h-6zM252 276h6v6h-6zM276 282h12v6h-12zM336 288h152v6h-152z"/><path fill="#b4fc90" d="M198 0h6v6h-6zM198 6h6v6h-6zM198 12h6v6h-6zM198 24h6v6h-6zM198 30h6v6h-6zM198 36h6v6h-6zM198 42h6v6h-6zM198 48h6v6h-6zM198 54h6v6h-6zM198 60h6v6h-6zM198 66h6v6h-6zM198 72h6v6h-6zM198 78h6v6h-6zM198 84h6v6h-6zM198 90h6v6h-6zM198 96h6v6h-6zM198 102h6v6h-6zM198 108h6v6h-6zM198 114h6v6h-6zM198 120h6v6h-6zM198 126h6v6h-6zM198 132h6v6h-6zM18 144h6v6h-6zM18 150h6v6h-6zM18 156h6v6h-6zM18 162h6v6h-6zM18 168h6v6h-6zM18 174h6v6h-6zM18 180h6v6h-6zM18 186h6v6h-6zM18 192h6v6h-6zM204 192h6v6h-6zM18 198h6v6h-6zM204 198h6v6h-6zM204 204h6v6h-6zM18 210h6v6h-6zM210 222h6v6h-6zM216 240h6v6h-6zM222 246h6v6h-6zM234 258h6v6h-6zM240 264h6v6h-6zM252 270h12v6h-12zM270 276h18v6h-18zM312 282h42v6h-42zM24 330h6v6h-6zM144 456h6v6h-6zM222 462h18v6h-18z"/><path fill="#ccfc84" d="M204 0h6v6h-6zM204 6h6v6h-6zM204 12h6v6h-6zM204 24h6v6h-6zM204 30h6v6h-6zM204 36h6v6h-6zM204 42h6v6h-6zM204 48h6v6h-6zM204 54h6v6h-6zM204 60h6v6h-6zM204 72h6v6h-6zM204 78h6v6h-6zM204 84h6v6h-6zM204 90h6v6h-6zM204 96h6v6h-6zM204 102h6v6h-6zM204 108h6v6h-6zM204 114h6v6h-6zM204 120h6v6h-6zM204 126h6v6h-6zM204 132h6v6h-6zM204 138h6v6h-6zM210 186h6v6h-6zM210 192h6v6h-6zM210 198h6v6h-6zM216 216h6v6h-6zM222 234h6v6h-6zM246 258h6v6h-6zM258 264h6v6h-6zM282 270h6v6h-6zM318 276h48v6h-48z"/><path fill="#e4fc6c" d="M210 0h6v6h-6zM210 6h6v6h-6zM210 12h6v6h-6zM210 18h6v6h-6zM210 24h6v6h-6zM210 30h6v6h-6zM210 36h6v6h-6zM210 42h6v6h-6zM210 48h6v6h-6zM210 54h6v6h-6zM210 60h6v6h-6zM210 66h6v6h-6zM210 72h6v6h-6zM210 78h6v6h-6zM210 84h6v6h-6zM210 90h6v6h-6zM210 96h6v6h-6zM210 102h6v6h-6zM210 108h6v6h-6zM216 168h6v6h-6zM216 174h6v6h-6zM216 180h6v6h-6zM216 186h6v6h-6zM222 210h6v6h-6zM228 222h6v6h-6zM234 234h6v6h-6zM240 240h6v6h-6zM246 246h6v6h-6zM270 258h6v6h-6zM288 264h18v6h-18zM342 270h72v6h-72zM420 270h42v6h-42zM468 270h20v6h-20z"/><path fill="#f0fc54" d="M216 0h6v6h-6zM216 6h6v6h-6zM216 12h6v6h-6zM216 18h6v6h-6zM216 24h6v6h-6zM216 30h6v6h-6zM216 36h6v6h-6zM216 42h6v6h-6zM216 48h6v6h-6zM216 54h6v6h-6zM216 60h6v6h-6zM216 66h6v6h-6zM216 72h6v6h-6zM216 78h6v6h-6zM216 84h6v6h-6zM216 90h6v6h-6zM216 96h6v6h-6zM216 102h6v6h-6zM222 174h6v6h-6zM222 180h6v6h-6zM228 204h6v6h-6zM240 228h6v6h-6zM246 234h6v6h-6zM252 240h6v6h-6zM276 252h6v6h-6zM294 258h6v6h-6zM348 264h30v6h-30zM24 354h6v6h-6zM30 378h6v6h-6zM48 414h6v6h-6zM66 432h6v6h-6zM162 462h6v6h-6z"/><path fill="#fcf03c" d="M222 0h6v6h-6zM222 6h6v6h-6zM222 12h6v6h-6zM222 18h6v6h-6zM222 24h6v6h-6zM222 30h6v6h-6zM222 36h6v6h-6zM228 144h6v6h-6zM228 150h6v6h-6zM228 156h6v6h-6zM228 162h6v6h-6zM234 180h6v6h-6zM234 186h6v6h-6zM240 204h6v6h-6zM246 216h6v6h-6zM252 222h6v6h-6zM264 234h6v6h-6zM288 246h12v6h-12zM312 252h12v6h-12zM330 252h6v6h-6zM372 258h116v6h-116z"/><path fill="#fcd848" d="M234 0h6v6h-6zM234 6h6v6h-6zM234 12h6v6h-6zM234 24h6v6h-6zM234 30h6v6h-6zM234 36h6v6h-6zM234 42h6v6h-6zM234 48h6v6h-6zM234 54h6v6h-6zM234 60h6v6h-6zM234 72h6v6h-6zM234 78h6v6h-6zM234 84h6v6h-6zM234 90h6v6h-6zM234 96h6v6h-6zM234 102h6v6h-6zM234 108h6v6h-6zM234 114h6v6h-6zM234 120h6v6h-6zM234 126h6v6h-6zM234 132h6v6h-6zM234 138h6v6h-6zM234 144h6v6h-6zM12 162h6v6h-6zM240 162h6v6h-6zM12 168h6v6h-6zM240 168h6v6h-6zM12 174h6v6h-6zM240 174h6v6h-6zM12 180h6v6h-6zM240 180h6v6h-6zM12 186h6v6h-6zM246 186h6v6h-6zM12 192h6v6h-6zM246 192h6v6h-6zM12 198h6v6h-6zM246 198h6v6h-6zM252 204h6v6h-6zM12 210h6v6h-6zM252 210h12v6h-12zM12 216h6v6h-6zM258 216h6v6h-6zM12 222h6v6h-6zM264 222h6v6h-6zM12 228h6v6h-6zM270 228h12v6h-12zM12 234h6v6h-6zM282 234h12v6h-12zM300 240h18v6h-18zM324 246h66v6h-66zM48 420h6v6h-6zM60 432h6v6h-6zM210 468h24v6h-24z"/><path fill="#fcc048" d="M240 0h6v6h-6zM240 6h6v6h-6zM240 12h6v6h-6zM240 18h6v6h-6zM240 24h6v6h-6zM240 30h6v6h-6zM240 36h6v6h-6zM240 42h6v6h-6zM240 48h6v6h-6zM240 54h6v6h-6zM240 60h6v6h-6zM240 66h6v6h-6zM240 72h6v6h-6zM240 78h6v6h-6zM240 84h6v6h-6zM240 90h6v6h-6zM240 96h6v6h-6zM240 102h6v6h-6zM240 114h6v6h-6zM246 132h6v6h-6zM246 138h6v6h-6zM246 144h6v6h-6zM246 150h6v6h-6zM246 156h6v6h-6zM246 162h6v6h-6zM252 174h6v6h-6zM252 180h6v6h-6zM252 186h6v6h-6zM258 192h6v6h-6zM258 198h12v6h-12zM264 204h6v6h-6zM270 210h6v6h-6zM276 216h6v6h-6zM282 222h12v6h-12zM294 228h18v6h-18zM312 234h30v6h-30zM354 240h134v6h-134z"/><path fill="#fcb448" d="M246 0h6v6h-6zM246 6h6v6h-6zM246 12h6v6h-6zM246 18h6v6h-6zM246 24h6v6h-6zM246 30h6v6h-6zM246 36h6v6h-6zM246 42h6v6h-6zM246 48h6v6h-6zM246 54h6v6h-6zM246 60h6v6h-6zM246 66h6v6h-6zM246 72h6v6h-6zM246 78h6v6h-6zM246 84h6v6h-6zM246 90h6v6h-6zM246 96h6v6h-6zM246 102h6v6h-6zM246 108h6v6h-6zM246 114h6v6h-6zM246 120h6v6h-6zM246 126h6v6h-6zM252 144h6v6h-6zM252 150h6v6h-6zM252 156h6v6h-6zM252 162h6v6h-6zM252 168h6v6h-6zM258 174h6v6h-6zM258 180h6v6h-6zM258 186h12v6h-12zM264 192h6v6h-6zM270 198h6v6h-6zM270 204h6v6h-6zM276 210h12v6h-12zM282 216h12v6h-12zM294 222h18v6h-18zM312 228h24v6h-24zM342 234h66v6h-66zM30 396h6v6h-6zM36 408h6v6h-6zM72 444h6v6h-6zM84 450h6v6h-6z"/><path fill="#fc9c48" d="M252 0h6v6h-6zM252 6h6v6h-6zM252 12h6v6h-6zM252 18h6v6h-6zM252 24h6v6h-6zM252 30h6v6h-6zM252 36h6v6h-6zM252 66h6v6h-6zM258 138h6v6h-6zM258 144h6v6h-6zM264 162h6v6h-6zM264 168h6v6h-6zM270 180h6v6h-6zM276 192h6v6h-6zM282 198h6v6h-6zM288 204h6v6h-6zM300 210h6v6h-6zM312 216h6v6h-6zM330 222h12v6h-12zM390 228h18v6h-18z"/><path fill="#fc903c" d="M258 0h6v6h-6zM258 6h6v6h-6zM258 12h6v6h-6zM258 18h6v6h-6zM258 24h6v6h-6zM258 30h6v6h-6zM258 36h6v6h-6zM258 42h6v6h-6zM258 48h6v6h-6zM258 54h6v6h-6zM258 60h6v6h-6zM258 66h6v6h-6zM258 72h6v6h-6zM258 78h6v6h-6zM258 84h6v6h-6zM258 90h6v6h-6zM258 96h6v6h-6zM258 102h6v6h-6zM258 108h6v6h-6zM258 114h6v6h-6zM258 120h6v6h-6zM258 126h6v6h-6zM264 144h6v6h-6zM264 150h6v6h-6zM264 156h6v6h-6zM270 168h6v6h-6zM270 174h6v6h-6zM276 186h6v6h-6zM282 192h6v6h-6zM288 198h6v6h-6zM294 204h6v6h-6zM306 210h12v6h-12zM318 216h18v6h-18zM348 222h54v6h-54zM12 318h6v6h-6zM24 384h6v6h-6zM78 450h6v6h-6zM114 462h6v6h-6z"/><path fill="#fc8448" d="M264 0h6v6h-6zM264 6h6v6h-6zM264 12h6v6h-6zM264 18h6v6h-6zM264 24h6v6h-6zM264 30h6v6h-6zM264 36h6v6h-6zM264 42h6v6h-6zM264 48h6v6h-6zM264 54h6v6h-6zM264 60h6v6h-6zM264 66h6v6h-6zM264 72h6v6h-6zM264 78h6v6h-6zM264 84h6v6h-6zM264 90h6v6h-6zM264 96h6v6h-6zM264 102h6v6h-6zM264 108h6v6h-6zM264 114h6v6h-6zM270 120h6v6h-6zM270 126h6v6h-6zM270 132h6v6h-6zM270 138h6v6h-6zM270 144h6v6h-6zM276 156h6v6h-6zM276 162h6v6h-6zM276 168h12v6h-12zM282 174h6v6h-6zM288 180h6v6h-6zM288 186h12v6h-12zM294 192h12v6h-12zM300 198h18v6h-18zM312 204h12v6h-12zM324 210h36v6h-36zM360 216h102v6h-102zM468 216h20v6h-20z"/><path fill="#fc7848" d="M270 0h6v6h-6zM270 6h6v6h-6zM270 12h6v6h-6zM270 18h6v6h-6zM270 24h6v6h-6zM270 30h6v6h-6zM270 36h6v6h-6zM270 42h6v6h-6zM270 48h6v6h-6zM270 54h6v6h-6zM270 60h6v6h-6zM270 66h6v6h-6zM270 72h6v6h-6zM270 78h6v6h-6zM270 84h6v6h-6zM270 90h6v6h-6zM270 96h6v6h-6zM270 102h6v6h-6zM270 108h6v6h-6zM270 114h6v6h-6zM276 120h6v6h-6zM276 126h6v6h-6zM276 132h6v6h-6zM276 138h6v6h-6zM276 144h6v6h-6zM276 150h12v6h-12zM282 156h6v6h-6zM282 162h6v6h-6zM288 168h6v6h-6zM288 174h12v6h-12zM294 180h12v6h-12zM300 186h12v6h-12zM306 192h12v6h-12zM318 198h18v6h-18zM324 204h30v6h-30zM360 210h54v6h-54zM420 210h24v6h-24zM462 216h6v6h-6z"/><path fill="#fc6c48" d="M276 0h6v6h-6zM276 6h6v6h-6zM276 12h6v6h-6zM276 24h6v6h-6zM276 30h6v6h-6zM276 36h6v6h-6zM276 42h6v6h-6zM276 48h6v6h-6zM276 54h6v6h-6zM276 60h6v6h-6zM276 66h6v6h-6zM276 72h6v6h-6zM276 78h6v6h-6zM276 84h6v6h-6zM276 90h6v6h-6zM276 96h6v6h-6zM276 102h6v6h-6zM276 108h6v6h-6zM276 114h6v6h-6zM282 120h6v6h-6zM282 126h6v6h-6zM282 132h6v6h-6zM282 138h6v6h-6zM282 144h12v6h-12zM288 150h6v6h-6zM288 156h6v6h-6zM288 162h12v6h-12zM294 168h6v6h-6zM300 174h6v6h-6zM306 180h6v6h-6zM312 186h12v6h-12zM318 192h18v6h-18zM336 198h24v6h-24zM354 204h60v6h-60zM414 210h6v6h-6zM444 210h44v6h-44zM48 432h6v6h-6z"/><path fill="#fc6048" d="M282 0h6v6h-6zM282 6h6v6h-6zM282 12h6v6h-6zM276 18h12v6h-12zM282 24h6v6h-6zM282 30h6v6h-6zM282 36h6v6h-6zM282 42h6v6h-6zM282 48h6v6h-6zM282 54h6v6h-6zM282 60h6v6h-6zM282 66h6v6h-6zM282 72h6v6h-6zM282 78h6v6h-6zM282 84h6v6h-6zM282 90h6v6h-6zM282 96h6v6h-6zM282 102h6v6h-6zM282 108h6v6h-6zM282 114h6v6h-6zM288 120h6v6h-6zM288 126h6v6h-6zM288 132h6v6h-6zM288 138h6v6h-6zM294 144h6v6h-6zM294 150h6v6h-6zM294 156h12v6h-12zM300 162h6v6h-6zM300 168h12v6h-12zM306 174h12v6h-12zM312 180h12v6h-12zM324 186h18v6h-18zM336 192h30v6h-30zM360 198h60v6h-60zM414 204h74v6h-74zM30 408h6v6h-6zM42 426h6v6h-6zM54 438h6v6h-6zM72 450h6v6h-6z"/><path fill="#fc5448" d="M288 0h6v6h-6zM288 6h6v6h-6zM288 12h6v6h-6zM288 24h6v6h-6zM288 30h6v6h-6zM288 36h6v6h-6zM288 42h6v6h-6zM288 48h6v6h-6zM288 54h6v6h-6zM288 60h6v6h-6zM288 66h6v6h-6zM288 72h6v6h-6zM288 78h6v6h-6zM288 84h6v6h-6zM288 90h6v6h-6zM288 96h6v6h-6zM288 102h6v6h-6zM288 108h12v6h-12zM288 114h12v6h-12zM294 120h6v6h-6zM294 126h6v6h-6zM294 132h6v6h-6zM294 138h12v6h-12zM300 144h6v6h-6zM300 150h12v6h-12zM306 156h6v6h-6zM306 162h12v6h-12zM312 168h12v6h-12zM318 174h12v6h-12zM324 180h24v6h-24zM342 186h24v6h-24zM366 192h48v6h-48zM420 192h12v6h-12zM420 198h68v6h-68zM60 444h6v6h-6z"/><path fill="#f03c3c" d="M294 0h6v6h-6zM294 6h6v6h-6zM294 12h6v6h-6zM294 18h6v6h-6zM294 24h6v6h-6zM294 30h6v6h-6zM294 36h6v6h-6zM294 42h6v6h-6zM300 90h6v6h-6zM300 96h6v6h-6zM300 102h6v6h-6zM300 108h6v6h-6zM300 114h6v6h-6zM306 126h6v6h-6zM306 132h6v6h-6zM312 144h6v6h-6zM324 162h6v6h-6zM336 168h6v6h-6zM348 174h12v6h-12zM366 180h18v6h-18zM408 186h80v6h-80z"/><path fill="#e44848" d="M300 0h12v6h-12zM306 6h6v6h-6zM306 12h6v6h-6zM300 18h12v6h-12zM306 24h6v6h-6zM306 30h6v6h-6zM306 36h6v6h-6zM306 42h6v6h-6zM306 48h6v6h-6zM306 54h6v6h-6zM306 60h6v6h-6zM306 66h6v6h-6zM306 72h6v6h-6zM306 78h6v6h-6zM306 84h6v6h-6zM306 90h6v6h-6zM306 96h12v6h-12zM312 102h6v6h-6zM312 108h6v6h-6zM312 114h6v6h-6zM312 120h12v6h-12zM312 126h12v6h-12zM318 132h6v6h-6zM318 138h12v6h-12zM324 144h12v6h-12zM330 150h12v6h-12zM336 156h12v6h-12zM342 162h18v6h-18zM354 168h30v6h-30zM372 174h66v6h-66zM414 180h6v6h-6zM426 180h62v6h-62z"/><path fill="#d84848" d="M312 0h6v6h-6zM312 6h6v6h-6zM312 12h6v6h-6zM312 18h6v6h-6zM312 24h6v6h-6zM312 30h6v6h-6zM312 36h6v6h-6zM312 42h6v6h-6zM312 48h6v6h-6zM312 54h6v6h-6zM312 60h6v6h-6zM312 66h6v6h-6zM312 72h12v6h-12zM312 78h12v6h-12zM312 84h12v6h-12zM312 90h12v6h-12zM318 96h6v6h-6zM318 102h6v6h-6zM318 108h6v6h-6zM318 114h6v6h-6zM324 120h12v6h-12zM324 126h12v6h-12zM324 132h18v6h-18zM330 138h18v6h-18zM336 144h18v6h-18zM342 150h18v6h-18zM348 156h18v6h-18zM372 156h6v6h-6zM360 162h24v6h-24zM384 168h78v6h-78zM468 168h20v6h-20zM438 174h50v6h-50zM42 432h6v6h-6zM48 438h6v6h-6z"/><path fill="#cc4848" d="M318 0h6v6h-6zM318 6h6v6h-6zM318 12h6v6h-6zM318 18h6v6h-6zM318 24h6v6h-6zM318 30h6v6h-6zM318 36h6v6h-6zM318 42h6v6h-6zM318 48h6v6h-6zM318 54h6v6h-6zM318 60h6v6h-6zM318 66h6v6h-6zM324 78h6v6h-6zM324 84h6v6h-6zM324 90h6v6h-6zM324 96h12v6h-12zM324 102h12v6h-12zM324 108h12v6h-12zM324 114h12v6h-12zM336 120h12v6h-12zM336 126h12v6h-12zM342 132h12v6h-12zM348 138h12v6h-12zM354 144h12v6h-12zM360 150h30v6h-30zM366 156h6v6h-6zM378 156h36v6h-36zM384 162h78v6h-78zM462 168h6v6h-6zM36 426h6v6h-6zM72 456h6v6h-6z"/><path fill="#c04848" d="M324 0h12v6h-12zM324 6h12v6h-12zM324 12h12v6h-12zM324 18h6v6h-6zM324 24h12v6h-12zM324 30h12v6h-12zM324 36h12v6h-12zM324 42h12v6h-12zM324 48h12v6h-12zM324 54h12v6h-12zM324 60h12v6h-12zM324 66h12v6h-12zM324 72h12v6h-12zM330 78h12v6h-12zM330 84h12v6h-12zM330 90h12v6h-12zM336 96h6v6h-6zM336 102h12v6h-12zM336 108h12v6h-12zM336 114h18v6h-18zM348 120h12v6h-12zM348 126h18v6h-18zM354 132h18v6h-18zM360 138h24v6h-24zM366 144h36v6h-36zM390 150h60v6h-60zM414 156h74v6h-74zM462 162h26v6h-26zM6 330h6v6h-6zM6 336h6v6h-6zM24 408h6v6h-6zM30 420h6v6h-6zM60 450h6v6h-6zM84 462h6v6h-6zM264 480h12v6h-12zM282 480h42v6h-42z"/><path fill="#b44848" d="M336 0h6v6h-6zM336 6h6v6h-6zM336 12h6v6h-6zM330 18h12v6h-12zM336 24h6v6h-6zM336 30h6v6h-6zM336 36h6v6h-6zM336 42h6v6h-6zM336 48h6v6h-6zM336 54h12v6h-12zM336 60h12v6h-12zM336 66h12v6h-12zM336 72h12v6h-12zM342 78h6v6h-6zM342 84h12v6h-12zM342 90h12v6h-12zM342 96h12v6h-12zM348 102h12v6h-12zM348 108h18v6h-18zM354 114h12v6h-12zM360 120h18v6h-18zM366 126h18v6h-18zM372 132h24v6h-24zM384 138h36v6h-36zM402 144h86v6h-86zM450 150h38v6h-38zM216 480h12v6h-12zM234 480h30v6h-30zM276 480h6v6h-6z"/><path fill="#a84848" d="M342 0h6v6h-6zM354 0h134v6h-134zM342 6h6v6h-6zM354 6h134v6h-134zM342 12h6v6h-6zM354 12h134v6h-134zM342 18h6v6h-6zM354 18h134v6h-134zM342 24h6v6h-6zM354 24h134v6h-134zM342 30h12v6h-12zM360 30h128v6h-128zM342 36h12v6h-12zM360 36h128v6h-128zM342 42h12v6h-12zM360 42h128v6h-128zM342 48h12v6h-12zM360 48h128v6h-128zM348 54h6v6h-6zM360 54h128v6h-128zM348 60h12v6h-12zM366 60h122v6h-122zM348 66h12v6h-12zM366 66h122v6h-122zM348 72h12v6h-12zM366 72h122v6h-122zM348 78h12v6h-12zM366 78h122v6h-122zM354 84h12v6h-12zM372 84h116v6h-116zM354 90h12v6h-12zM372 90h116v6h-116zM354 96h18v6h-18zM378 96h110v6h-110zM360 102h18v6h-18zM384 102h104v6h-104zM366 108h18v6h-18zM390 108h98v6h-98zM366 114h24v6h-24zM402 114h86v6h-86zM378 120h24v6h-24zM420 120h68v6h-68zM384 126h42v6h-42zM456 126h32v6h-32zM396 132h60v6h-60zM420 138h68v6h-68zM6 342h6v6h-6zM0 348h6v6h-6zM0 354h6v6h-6zM0 360h6v6h-6zM0 366h6v6h-6zM0 372h12v6h-12zM0 378h12v6h-12zM0 384h12v6h-12zM6 390h6v6h-6zM0 396h18v6h-18zM0 402h18v6h-18zM0 408h18v6h-18zM0 414h24v6h-24zM0 420h24v6h-24zM0 426h36v6h-36zM0 432h36v6h-36zM6 438h30v6h-30zM42 438h6v6h-6zM0 444h42v6h-42zM0 450h60v6h-60zM0 456h66v6h-66zM0 462h72v6h-72zM0 468h84v6h-84zM0 474h114v6h-114zM6 480h36v6h-36zM48 480h42v6h-42zM96 480h42v6h-42zM228 480h6v6h-6z"/><path fill="#9c3c3c" d="M348 0h6v6h-6zM348 6h6v6h-6zM348 12h6v6h-6zM348 18h6v6h-6zM354 30h6v6h-6zM354 36h6v6h-6zM354 42h6v6h-6zM354 48h6v6h-6zM354 54h6v6h-6zM360 66h6v6h-6zM360 72h6v6h-6zM366 84h6v6h-6zM366 90h6v6h-6zM390 114h6v6h-6zM402 120h18v6h-18zM426 126h30v6h-30zM462 132h26v6h-26zM0 252h6v6h-6zM0 270h6v6h-6zM0 276h6v6h-6zM0 282h6v6h-6zM0 288h6v6h-6zM0 294h6v6h-6zM0 300h6v6h-6zM0 306h6v6h-6zM0 312h6v6h-6zM0 318h6v6h-6zM0 324h6v6h-6zM0 330h6v6h-6zM0 336h6v6h-6zM0 342h6v6h-6zM6 366h6v6h-6zM84 468h12v6h-12zM114 474h6v6h-6zM138 480h30v6h-30zM180 480h6v6h-6zM216 486h6v1h-6z"/><path fill="#f04848" d="M300 6h6v6h-6zM300 12h6v6h-6zM300 24h6v6h-6zM300 30h6v6h-6zM300 36h6v6h-6zM300 42h6v6h-6zM300 48h6v6h-6zM300 54h6v6h-6zM300 60h6v6h-6zM300 66h6v6h-6zM300 72h6v6h-6zM300 78h6v6h-6zM300 84h6v6h-6zM306 102h6v6h-6zM306 108h6v6h-6zM306 114h6v6h-6zM306 120h6v6h-6zM312 132h6v6h-6zM312 138h6v6h-6zM318 144h6v6h-6zM318 150h12v6h-12zM324 156h12v6h-12zM330 162h12v6h-12zM342 168h12v6h-12zM360 174h12v6h-12zM384 180h30v6h-30zM420 180h6v6h-6z"/><path fill="#48fcfc" d="M168 18h6v6h-6zM168 66h6v6h-6zM168 114h6v6h-6zM168 138h6v6h-6zM168 144h6v6h-6zM168 150h6v6h-6zM168 156h6v6h-6zM168 162h6v6h-6zM168 168h6v6h-6zM168 174h6v6h-6zM174 228h6v6h-6zM174 234h6v6h-6zM180 252h6v6h-6zM186 270h6v6h-6zM192 276h6v6h-6zM204 288h6v6h-6zM210 294h6v6h-6zM222 300h12v6h-12zM240 306h12v6h-12zM282 312h24v6h-24zM324 312h6v6h-6zM132 444h6v6h-6z"/><path fill="#78fccc" d="M180 18h6v6h-6zM180 66h6v6h-6zM180 114h6v6h-6zM186 198h6v6h-6zM186 204h6v6h-6zM192 234h6v6h-6zM198 252h6v6h-6zM24 282h6v6h-6zM228 282h6v6h-6zM270 294h12v6h-12zM324 300h6v6h-6zM342 300h146v6h-146zM36 366h6v6h-6zM84 432h6v6h-6zM96 438h6v6h-6zM186 456h6v6h-6z"/><path fill="#b4fc84" d="M198 18h6v6h-6zM204 180h6v6h-6zM204 186h6v6h-6zM18 204h6v6h-6zM18 216h6v6h-6zM210 216h6v6h-6zM216 234h6v6h-6zM228 252h6v6h-6zM246 264h6v6h-6zM288 276h6v6h-6zM354 282h134v6h-134zM42 396h6v6h-6zM54 414h6v6h-6zM60 420h6v6h-6zM66 426h6v6h-6zM84 438h6v6h-6zM96 444h6v6h-6zM114 450h6v6h-6zM216 462h6v6h-6z"/><path fill="#ccfc78" d="M204 18h6v6h-6zM204 66h6v6h-6zM210 174h6v6h-6zM210 180h6v6h-6zM216 210h6v6h-6zM222 228h6v6h-6zM228 240h6v6h-6zM234 246h6v6h-6zM240 252h6v6h-6zM252 258h6v6h-6zM18 264h6v6h-6zM264 264h6v6h-6zM18 270h6v6h-6zM288 270h12v6h-12zM366 276h122v6h-122zM108 450h6v6h-6zM192 462h6v6h-6z"/><path fill="#fccc48" d="M234 18h6v6h-6zM234 66h6v6h-6zM240 108h6v6h-6zM240 120h6v6h-6zM240 126h6v6h-6zM240 132h6v6h-6zM240 138h6v6h-6zM240 144h6v6h-6zM240 150h6v6h-6zM240 156h6v6h-6zM246 168h6v6h-6zM246 174h6v6h-6zM246 180h6v6h-6zM252 192h6v6h-6zM252 198h6v6h-6zM258 204h6v6h-6zM264 210h6v6h-6zM264 216h12v6h-12zM270 222h12v6h-12zM282 228h12v6h-12zM294 234h18v6h-18zM318 240h36v6h-36zM390 246h98v6h-98zM42 414h6v6h-6zM66 438h6v6h-6z"/><path fill="#fc4848" d="M288 18h6v6h-6zM294 84h6v6h-6zM294 90h6v6h-6zM294 96h6v6h-6zM294 102h6v6h-6zM300 120h6v6h-6zM300 126h6v6h-6zM300 132h6v6h-6zM306 138h6v6h-6zM306 144h6v6h-6zM312 150h6v6h-6zM312 156h12v6h-12zM318 162h6v6h-6zM324 168h12v6h-12zM330 174h18v6h-18zM348 180h12v6h-12zM366 186h24v6h-24zM414 192h6v6h-6zM432 192h56v6h-56z"/><path fill="#9c4848" d="M348 24h6v6h-6zM360 60h6v6h-6zM360 78h6v6h-6zM372 96h6v6h-6zM378 102h6v6h-6zM384 108h6v6h-6zM396 114h6v6h-6zM456 132h6v6h-6zM0 390h6v6h-6zM12 390h6v6h-6zM18 408h6v6h-6zM24 420h6v6h-6zM0 438h6v6h-6zM36 438h6v6h-6zM42 444h6v6h-6zM72 462h6v6h-6zM0 480h6v6h-6zM42 480h6v6h-6zM90 480h6v6h-6zM6 486h36v1h-36zM48 486h42v1h-42zM96 486h42v1h-42zM144 486h36v1h-36zM186 486h30v1h-30zM222 486h6v1h-6zM234 486h42v1h-42zM282 486h42v1h-42zM330 486h36v1h-36zM372 486h42v1h-42zM420 486h42v1h-42zM468 486h20v1h-20z"/><path fill="#fcfc48" d="M222 42h6v6h-6zM222 48h6v6h-6zM222 54h6v6h-6zM222 60h6v6h-6zM222 72h6v6h-6zM222 78h6v6h-6zM222 84h6v6h-6zM222 90h6v6h-6zM222 96h6v6h-6zM222 102h6v6h-6zM222 108h6v6h-6zM222 114h6v6h-6zM222 120h6v6h-6zM222 126h6v6h-6zM228 174h6v6h-6zM228 180h6v6h-6zM228 186h6v6h-6zM234 198h6v6h-6zM234 204h6v6h-6zM240 216h6v6h-6zM246 222h6v6h-6zM246 228h6v6h-6zM252 234h6v6h-6zM264 240h6v6h-6zM276 246h6v6h-6zM288 252h18v6h-18zM324 258h42v6h-42z"/><path fill="#fca848" d="M252 42h6v6h-6zM252 48h6v6h-6zM252 54h6v6h-6zM252 60h6v6h-6zM252 72h6v6h-6zM252 78h6v6h-6zM252 84h6v6h-6zM252 90h6v6h-6zM252 96h6v6h-6zM252 102h6v6h-6zM252 108h6v6h-6zM252 114h6v6h-6zM252 120h6v6h-6zM252 126h6v6h-6zM252 132h6v6h-6zM252 138h6v6h-6zM258 150h6v6h-6zM258 156h6v6h-6zM258 162h6v6h-6zM258 168h6v6h-6zM264 174h6v6h-6zM264 180h6v6h-6zM270 186h6v6h-6zM270 192h6v6h-6zM276 198h6v6h-6zM276 204h12v6h-12zM288 210h12v6h-12zM294 216h18v6h-18zM312 222h18v6h-18zM336 228h54v6h-54zM408 234h80v6h-80zM48 426h6v6h-6zM54 432h6v6h-6z"/><path fill="#fce43c" d="M228 48h6v6h-6zM228 54h6v6h-6zM228 60h6v6h-6zM228 66h6v6h-6zM228 72h6v6h-6zM228 78h6v6h-6zM228 84h6v6h-6zM228 90h6v6h-6zM228 96h6v6h-6zM228 102h6v6h-6zM228 108h6v6h-6zM228 114h6v6h-6zM228 120h6v6h-6zM228 126h6v6h-6zM228 132h6v6h-6zM228 138h6v6h-6zM234 174h6v6h-6zM240 198h6v6h-6zM276 240h6v6h-6zM300 246h6v6h-6zM324 252h6v6h-6zM336 252h36v6h-36zM78 444h6v6h-6z"/><path fill="#fc3c3c" d="M294 48h6v6h-6zM294 54h6v6h-6zM294 60h6v6h-6zM294 66h6v6h-6zM294 72h6v6h-6zM294 78h6v6h-6zM360 180h6v6h-6zM390 186h18v6h-18z"/><path fill="#a83c3c" d="M0 66h6v6h-6zM0 114h6v6h-6zM0 162h6v6h-6zM0 204h6v6h-6zM0 210h6v6h-6zM0 216h6v6h-6zM0 222h6v6h-6zM0 228h6v6h-6zM0 234h6v6h-6zM0 240h6v6h-6zM0 246h6v6h-6zM0 258h6v6h-6zM0 264h6v6h-6zM6 348h6v6h-6zM6 354h6v6h-6zM6 360h6v6h-6zM12 384h6v6h-6zM18 402h6v6h-6zM24 414h6v6h-6zM36 432h6v6h-6zM48 444h6v6h-6zM66 456h6v6h-6zM78 462h6v6h-6zM96 468h6v6h-6zM120 474h12v6h-12zM168 480h12v6h-12zM186 480h30v6h-30z"/><path fill="#fcf048" d="M222 66h6v6h-6zM228 168h6v6h-6zM234 192h6v6h-6zM240 210h6v6h-6zM252 228h12v6h-12zM258 234h6v6h-6zM270 240h6v6h-6zM282 246h6v6h-6zM306 252h6v6h-6zM366 258h6v6h-6zM18 324h6v6h-6zM30 384h6v6h-6zM36 396h6v6h-6zM42 408h6v6h-6zM96 450h6v6h-6zM114 456h6v6h-6zM150 462h6v6h-6zM282 468h18v6h-18z"/><path fill="#3cccfc" d="M30 72h6v6h-6zM30 78h6v6h-6zM30 84h6v6h-6zM30 90h6v6h-6zM30 96h6v6h-6zM30 102h6v6h-6zM30 108h6v6h-6zM30 114h6v6h-6zM30 120h6v6h-6zM30 126h6v6h-6zM30 132h6v6h-6zM30 138h6v6h-6zM30 144h6v6h-6zM30 150h6v6h-6zM156 150h6v6h-6zM30 156h6v6h-6zM156 156h6v6h-6zM30 162h6v6h-6zM156 162h6v6h-6zM30 168h6v6h-6zM156 168h6v6h-6zM30 174h6v6h-6zM156 174h6v6h-6zM30 180h6v6h-6zM30 186h6v6h-6zM30 192h6v6h-6zM30 198h6v6h-6zM30 204h6v6h-6zM30 210h6v6h-6zM30 216h6v6h-6zM162 246h6v6h-6zM36 318h6v6h-6zM282 324h12v6h-12zM42 348h6v6h-6zM126 438h6v6h-6zM156 444h6v6h-6zM222 450h42v6h-42z"/><path fill="#9cfca8" d="M192 102h6v6h-6zM192 108h6v6h-6zM192 114h6v6h-6zM192 120h6v6h-6zM192 126h6v6h-6zM192 132h6v6h-6zM192 138h6v6h-6zM192 144h6v6h-6zM198 204h6v6h-6zM198 210h6v6h-6zM204 228h6v6h-6zM210 246h6v6h-6zM216 252h6v6h-6zM228 264h6v6h-6zM234 270h6v6h-6zM246 276h6v6h-6zM264 282h12v6h-12zM312 288h24v6h-24zM24 312h6v6h-6zM30 354h6v6h-6zM42 390h6v6h-6zM78 432h6v6h-6zM396 462h92v6h-92z"/><path fill="#3c3cc0" d="M60 108h6v6h-6zM60 114h6v6h-6zM60 120h6v6h-6zM60 126h6v6h-6zM60 132h6v6h-6zM60 138h6v6h-6zM60 144h6v6h-6zM60 150h6v6h-6zM60 156h6v6h-6zM60 162h6v6h-6zM60 168h6v6h-6zM60 174h6v6h-6zM60 180h6v6h-6zM60 186h6v6h-6zM60 192h6v6h-6zM60 198h6v6h-6zM60 204h6v6h-6zM60 210h6v6h-6zM60 216h6v6h-6zM66 276h6v6h-6zM66 282h6v6h-6zM72 306h6v6h-6zM90 336h12v6h-12zM150 384h6v6h-6zM144 390h6v6h-6zM150 396h6v6h-6zM174 408h6v6h-6zM192 414h12v6h-12zM246 420h54v6h-54z"/><path fill="#f0fc60" d="M216 108h6v6h-6zM216 114h6v6h-6zM216 120h6v6h-6zM216 126h6v6h-6zM216 132h6v6h-6zM216 138h6v6h-6zM216 144h6v6h-6zM216 150h6v6h-6zM222 186h6v6h-6zM222 192h6v6h-6zM228 210h6v6h-6zM234 222h6v6h-6zM240 234h6v6h-6zM246 240h6v6h-6zM258 246h6v6h-6zM270 252h6v6h-6zM282 258h12v6h-12zM312 264h36v6h-36z"/><path fill="#84fcc0" d="M186 114h6v6h-6zM186 120h6v6h-6zM186 126h6v6h-6zM186 132h6v6h-6zM186 138h6v6h-6zM186 144h6v6h-6zM186 150h6v6h-6zM186 156h6v6h-6zM186 162h6v6h-6zM186 168h6v6h-6zM192 216h6v6h-6zM198 240h6v6h-6zM204 252h6v6h-6zM228 276h6v6h-6zM240 282h6v6h-6zM258 288h6v6h-6zM24 294h6v6h-6zM294 294h30v6h-30zM42 384h6v6h-6zM48 396h6v6h-6zM132 450h6v6h-6zM174 456h6v6h-6z"/><path fill="#d8fc6c" d="M210 114h6v6h-6zM210 120h6v6h-6zM210 126h6v6h-6zM210 132h6v6h-6zM210 138h6v6h-6zM216 192h6v6h-6zM222 216h6v6h-6zM228 228h6v6h-6zM252 252h6v6h-6zM264 258h6v6h-6zM282 264h6v6h-6zM324 270h18v6h-18zM18 282h6v6h-6zM18 288h6v6h-6zM30 372h6v6h-6zM36 390h6v6h-6zM42 402h6v6h-6zM78 438h6v6h-6zM90 444h6v6h-6zM180 462h6v6h-6z"/><path fill="#fc9048" d="M264 120h6v6h-6zM264 126h6v6h-6zM264 132h6v6h-6zM264 138h6v6h-6zM270 150h6v6h-6zM270 156h6v6h-6zM270 162h6v6h-6zM276 174h6v6h-6zM276 180h12v6h-12zM282 186h6v6h-6zM288 192h6v6h-6zM294 198h6v6h-6zM300 204h12v6h-12zM318 210h6v6h-6zM336 216h24v6h-24zM402 222h86v6h-86z"/><path fill="#fcfc54" d="M222 132h6v6h-6zM222 138h6v6h-6zM222 144h6v6h-6zM222 150h6v6h-6zM222 156h6v6h-6zM222 162h6v6h-6zM222 168h6v6h-6zM228 192h6v6h-6zM228 198h6v6h-6zM234 210h6v6h-6zM234 216h6v6h-6zM240 222h6v6h-6zM258 240h6v6h-6zM264 246h12v6h-12zM282 252h6v6h-6zM300 258h24v6h-24zM378 264h110v6h-110z"/><path fill="#fc9c3c" d="M258 132h6v6h-6zM342 222h6v6h-6zM408 228h80v6h-80zM12 306h6v6h-6zM12 312h6v6h-6zM18 360h6v6h-6zM42 420h6v6h-6zM60 438h6v6h-6zM96 456h6v6h-6zM156 468h12v6h-12z"/><path fill="#489cfc" d="M144 138h6v6h-6zM144 144h6v6h-6zM144 150h6v6h-6zM144 156h6v6h-6zM144 162h6v6h-6zM144 168h6v6h-6zM144 174h6v6h-6zM144 180h6v6h-6zM144 186h6v6h-6zM144 192h6v6h-6zM36 198h6v6h-6zM144 198h6v6h-6zM36 204h6v6h-6zM144 204h6v6h-6zM36 210h6v6h-6zM144 210h6v6h-6zM36 216h6v6h-6zM144 216h6v6h-6zM36 222h6v6h-6zM144 222h6v6h-6zM36 228h6v6h-6zM144 228h6v6h-6zM36 234h6v6h-6zM36 240h6v6h-6zM36 246h6v6h-6zM36 252h6v6h-6zM150 252h6v6h-6zM150 258h6v6h-6zM150 264h6v6h-6zM150 270h6v6h-6zM156 282h6v6h-6zM156 288h6v6h-6zM162 294h6v6h-6zM162 300h6v6h-6zM168 306h6v6h-6zM174 312h6v6h-6zM42 318h6v6h-6zM180 318h12v6h-12zM192 324h12v6h-12zM210 330h18v6h-18zM240 336h48v6h-48zM48 348h6v6h-6zM54 366h6v6h-6zM60 378h6v6h-6zM78 402h6v6h-6zM84 408h6v6h-6zM102 420h6v6h-6zM114 426h6v6h-6zM132 432h6v6h-6zM156 438h6v6h-6zM210 444h30v6h-30z"/><path fill="#4884fc" d="M138 144h6v6h-6zM138 150h6v6h-6zM138 156h6v6h-6zM138 162h6v6h-6zM138 168h6v6h-6zM138 174h6v6h-6zM138 180h6v6h-6zM138 186h6v6h-6zM138 192h6v6h-6zM138 198h6v6h-6zM138 204h6v6h-6zM138 210h6v6h-6zM138 216h6v6h-6zM138 222h6v6h-6zM138 228h6v6h-6zM138 234h6v6h-6zM144 264h6v6h-6zM144 270h6v6h-6zM144 276h6v6h-6zM150 288h6v6h-6zM42 294h6v6h-6zM150 294h6v6h-6zM42 300h6v6h-6zM156 300h6v6h-6zM156 306h6v6h-6zM162 312h6v6h-6zM168 318h6v6h-6zM174 324h6v6h-6zM48 330h6v6h-6zM186 330h6v6h-6zM198 336h18v6h-18zM234 342h48v6h-48zM54 354h6v6h-6zM60 366h6v6h-6zM66 378h6v6h-6zM78 396h6v6h-6zM84 402h6v6h-6zM102 414h6v6h-6zM126 426h6v6h-6zM144 432h6v6h-6zM174 438h12v6h-12zM306 444h138v6h-138z"/><path fill="#48b4fc" d="M150 144h6v6h-6zM150 150h6v6h-6zM150 156h6v6h-6zM150 162h6v6h-6zM150 168h6v6h-6zM150 174h6v6h-6zM150 180h6v6h-6zM150 186h6v6h-6zM150 192h6v6h-6zM150 198h6v6h-6zM150 204h6v6h-6zM150 210h6v6h-6zM150 216h6v6h-6zM156 240h6v6h-6zM156 246h6v6h-6zM156 252h6v6h-6zM156 258h6v6h-6zM162 270h6v6h-6zM162 276h6v6h-6zM168 282h6v6h-6zM168 288h6v6h-6zM174 294h6v6h-6zM174 300h12v6h-12zM180 306h12v6h-12zM186 312h12v6h-12zM198 318h18v6h-18zM216 324h24v6h-24zM252 330h48v6h-48zM54 372h6v6h-6zM60 384h6v6h-6zM72 402h6v6h-6zM78 408h6v6h-6zM96 420h6v6h-6z"/><path fill="#c0fc84" d="M204 144h6v6h-6zM204 150h6v6h-6zM204 156h6v6h-6zM204 162h6v6h-6zM204 168h6v6h-6zM204 174h6v6h-6zM210 204h6v6h-6zM210 210h6v6h-6zM18 222h6v6h-6zM216 222h6v6h-6zM18 228h6v6h-6zM216 228h6v6h-6zM18 234h6v6h-6zM18 240h6v6h-6zM222 240h6v6h-6zM18 246h6v6h-6zM228 246h6v6h-6zM234 252h6v6h-6zM240 258h6v6h-6zM252 264h6v6h-6zM264 270h18v6h-18zM294 276h24v6h-24zM24 336h6v6h-6zM30 366h6v6h-6zM36 384h6v6h-6zM204 462h12v6h-12z"/><path fill="#d8fc78" d="M210 144h6v6h-6zM210 150h6v6h-6zM210 156h6v6h-6zM210 162h6v6h-6zM210 168h6v6h-6zM216 198h6v6h-6zM216 204h6v6h-6zM222 222h6v6h-6zM228 234h6v6h-6zM234 240h6v6h-6zM240 246h6v6h-6zM246 252h6v6h-6zM258 258h6v6h-6zM270 264h12v6h-12zM300 270h24v6h-24z"/><path fill="#9cfcb4" d="M192 150h6v6h-6zM192 156h6v6h-6zM192 162h6v6h-6zM192 168h6v6h-6zM192 174h6v6h-6zM192 180h6v6h-6zM198 216h6v6h-6zM204 234h6v6h-6zM216 258h6v6h-6zM222 264h6v6h-6zM240 276h6v6h-6zM258 282h6v6h-6zM288 288h24v6h-24zM126 450h6v6h-6z"/><path fill="#b4fc9c" d="M198 156h6v6h-6zM204 210h6v6h-6zM210 228h6v6h-6zM300 282h12v6h-12z"/><path fill="#e4fc60" d="M216 156h6v6h-6zM216 162h6v6h-6zM222 198h6v6h-6zM222 204h6v6h-6zM228 216h6v6h-6zM234 228h6v6h-6zM252 246h6v6h-6zM258 252h12v6h-12zM276 258h6v6h-6zM306 264h6v6h-6zM414 270h6v6h-6zM462 270h6v6h-6zM54 420h6v6h-6zM60 426h6v6h-6zM102 450h6v6h-6zM126 456h6v6h-6z"/><path fill="#6cfcd8" d="M180 162h6v6h-6zM186 228h6v6h-6zM192 246h6v6h-6zM24 258h6v6h-6zM24 264h6v6h-6zM252 294h6v6h-6zM294 300h6v6h-6zM54 402h6v6h-6zM78 426h6v6h-6zM198 456h6v6h-6z"/><path fill="#a8fc9c" d="M198 162h6v6h-6zM198 168h6v6h-6zM198 174h6v6h-6zM198 180h6v6h-6zM204 216h6v6h-6zM210 234h6v6h-6zM216 246h6v6h-6zM222 252h6v6h-6zM228 258h6v6h-6zM234 264h6v6h-6zM246 270h6v6h-6zM258 276h12v6h-12zM288 282h12v6h-12zM36 378h6v6h-6zM120 450h6v6h-6zM150 456h6v6h-6zM264 462h36v6h-36z"/><path fill="#3c60fc" d="M42 168h6v6h-6zM42 174h6v6h-6zM42 180h6v6h-6zM42 186h6v6h-6zM42 192h6v6h-6zM42 198h6v6h-6zM42 204h6v6h-6zM42 210h6v6h-6zM42 216h6v6h-6zM42 222h6v6h-6zM132 222h6v6h-6zM42 228h6v6h-6zM132 228h6v6h-6zM42 234h6v6h-6zM132 234h6v6h-6zM42 240h6v6h-6zM132 240h6v6h-6zM42 246h6v6h-6zM132 246h6v6h-6zM42 252h6v6h-6zM132 252h6v6h-6zM132 258h6v6h-6zM138 282h6v6h-6zM138 288h6v6h-6zM144 300h6v6h-6zM48 306h6v6h-6zM48 312h6v6h-6zM150 312h6v6h-6zM54 336h6v6h-6zM174 336h6v6h-6zM186 342h18v6h-18zM216 348h24v6h-24zM60 354h6v6h-6zM294 354h194v6h-194zM66 366h6v6h-6zM72 378h6v6h-6zM102 408h6v6h-6zM126 420h6v6h-6zM138 426h12v6h-12zM162 432h18v6h-18zM216 438h36v6h-36z"/><path fill="#60fcd8" d="M180 168h6v6h-6zM180 174h6v6h-6zM180 180h6v6h-6zM180 186h6v6h-6zM180 192h6v6h-6zM24 240h6v6h-6zM24 246h6v6h-6zM24 252h6v6h-6zM228 288h6v6h-6zM246 294h6v6h-6zM276 300h18v6h-18zM30 330h6v6h-6zM36 360h6v6h-6zM42 378h6v6h-6zM144 450h6v6h-6zM204 456h12v6h-12z"/><path fill="#84fccc" d="M186 174h6v6h-6zM186 180h6v6h-6zM186 186h6v6h-6zM186 192h6v6h-6zM192 222h6v6h-6zM192 228h6v6h-6zM198 246h6v6h-6zM204 258h6v6h-6zM210 264h6v6h-6zM216 270h6v6h-6zM222 276h6v6h-6zM234 282h6v6h-6zM246 288h12v6h-12zM282 294h12v6h-12z"/><path fill="#48f0fc" d="M168 180h6v6h-6zM168 186h6v6h-6zM168 192h6v6h-6zM168 198h6v6h-6zM168 204h6v6h-6zM168 210h6v6h-6zM168 216h6v6h-6zM168 222h6v6h-6zM174 240h6v6h-6zM174 246h6v6h-6zM174 252h6v6h-6zM180 258h6v6h-6zM180 264h6v6h-6zM186 276h6v6h-6zM192 282h6v6h-6zM198 288h6v6h-6zM204 294h6v6h-6zM30 300h6v6h-6zM216 300h6v6h-6zM228 306h12v6h-12zM252 312h30v6h-30zM336 318h30v6h-30zM372 318h42v6h-42zM420 318h42v6h-42zM468 318h20v6h-20zM36 336h6v6h-6zM36 342h6v6h-6zM42 366h6v6h-6zM48 378h6v6h-6zM54 390h6v6h-6zM66 408h6v6h-6zM90 426h6v6h-6zM102 432h6v6h-6zM114 438h6v6h-6zM138 444h6v6h-6zM168 450h6v6h-6zM180 450h6v6h-6z"/><path fill="#90fcb4" d="M192 186h6v6h-6zM192 192h6v6h-6zM198 222h6v6h-6zM198 228h6v6h-6zM204 240h6v6h-6zM210 252h6v6h-6zM228 270h6v6h-6zM234 276h6v6h-6zM252 282h6v6h-6zM276 288h12v6h-12zM366 294h6v6h-6zM414 294h6v6h-6zM462 294h6v6h-6zM24 300h6v6h-6zM30 348h6v6h-6zM36 372h6v6h-6zM54 408h6v6h-6zM72 426h6v6h-6zM168 456h6v6h-6z"/><path fill="#48d8fc" d="M162 198h6v6h-6zM162 204h6v6h-6zM162 210h6v6h-6zM162 216h6v6h-6zM162 222h6v6h-6zM162 228h6v6h-6zM168 246h6v6h-6zM168 252h6v6h-6zM168 258h6v6h-6zM174 270h6v6h-6zM174 276h6v6h-6zM180 282h6v6h-6zM186 288h6v6h-6zM186 294h12v6h-12zM198 300h6v6h-6zM204 306h12v6h-12zM222 312h12v6h-12zM246 318h24v6h-24zM330 324h158v6h-158zM48 372h6v6h-6zM54 384h6v6h-6zM66 402h6v6h-6zM72 408h6v6h-6zM78 414h6v6h-6zM96 426h6v6h-6zM108 432h6v6h-6zM150 444h6v6h-6z"/><path fill="#60fce4" d="M180 198h6v6h-6zM24 216h6v6h-6zM24 222h6v6h-6zM24 228h6v6h-6zM24 234h6v6h-6zM186 234h6v6h-6zM186 240h6v6h-6zM192 252h6v6h-6zM198 264h6v6h-6zM210 282h12v6h-12zM222 288h6v6h-6zM240 294h6v6h-6zM270 300h6v6h-6zM420 306h30v6h-30zM48 390h6v6h-6zM60 408h6v6h-6zM66 414h6v6h-6zM72 420h6v6h-6zM102 438h6v6h-6zM120 444h6v6h-6zM216 456h12v6h-12z"/><path fill="#fc5430" d="M6 204h6v6h-6zM6 210h6v6h-6zM6 216h6v6h-6zM6 222h6v6h-6zM6 228h6v6h-6zM6 234h6v6h-6zM6 240h6v6h-6zM132 468h6v6h-6zM198 474h24v6h-24z"/><path fill="#fcd83c" d="M12 204h6v6h-6zM12 240h6v6h-6zM18 336h6v6h-6zM36 402h6v6h-6zM90 450h6v6h-6zM108 456h6v6h-6zM138 462h6v6h-6zM204 468h6v6h-6z"/><path fill="#4848fc" d="M120 204h6v6h-6zM120 222h6v6h-6zM120 228h6v6h-6zM120 234h6v6h-6zM120 240h6v6h-6zM120 246h6v6h-6zM120 252h6v6h-6zM120 258h6v6h-6zM120 264h6v6h-6zM120 270h6v6h-6zM126 294h6v6h-6zM54 300h6v6h-6zM126 300h6v6h-6zM126 306h6v6h-6zM132 312h6v6h-6zM132 318h6v6h-6zM138 324h6v6h-6zM60 330h6v6h-6zM138 330h6v6h-6zM144 336h6v6h-6zM150 342h12v6h-12zM66 348h6v6h-6zM162 348h6v6h-6zM174 354h18v6h-18zM72 360h6v6h-6zM198 360h42v6h-42zM84 378h6v6h-6zM90 384h6v6h-6zM96 390h6v6h-6zM102 396h6v6h-6zM120 408h6v6h-6zM132 414h6v6h-6zM150 420h6v6h-6zM174 426h6v6h-6zM228 432h6v6h-6z"/><path fill="#3cd8fc" d="M30 222h6v6h-6zM30 228h6v6h-6zM30 234h6v6h-6zM30 240h6v6h-6zM30 246h6v6h-6zM30 252h6v6h-6zM30 258h6v6h-6zM36 324h6v6h-6zM42 354h6v6h-6zM204 450h18v6h-18z"/><path fill="#4848e4" d="M54 228h6v6h-6zM54 234h6v6h-6zM54 240h6v6h-6zM54 246h6v6h-6zM54 252h6v6h-6zM114 252h6v6h-6zM54 258h6v6h-6zM114 258h6v6h-6zM54 264h6v6h-6zM114 264h6v6h-6zM54 270h6v6h-6zM114 270h6v6h-6zM114 276h6v6h-6zM114 282h6v6h-6zM114 288h6v6h-6zM60 294h6v6h-6zM114 294h6v6h-6zM60 300h6v6h-6zM114 300h6v6h-6zM60 306h6v6h-6zM114 306h6v6h-6zM120 312h6v6h-6zM120 318h6v6h-6zM66 324h6v6h-6zM120 324h6v6h-6zM66 330h6v6h-6zM120 330h12v6h-12zM72 336h6v6h-6zM126 336h6v6h-6zM72 342h6v6h-6zM132 342h12v6h-12zM78 348h6v6h-6zM132 348h12v6h-12zM78 354h6v6h-6zM144 354h12v6h-12zM84 360h6v6h-6zM150 360h24v6h-24zM90 366h6v6h-6zM168 366h42v6h-42zM90 372h12v6h-12zM234 372h254v6h-254zM96 378h12v6h-12zM102 384h12v6h-12zM108 390h12v6h-12zM114 396h12v6h-12zM126 402h12v6h-12zM138 408h6v6h-6zM150 414h12v6h-12zM168 420h18v6h-18zM204 426h36v6h-36zM366 432h6v6h-6zM414 432h74v6h-74z"/><path fill="#4878fc" d="M138 240h6v6h-6zM138 246h6v6h-6zM138 252h6v6h-6zM138 258h6v6h-6zM144 282h6v6h-6zM42 288h6v6h-6zM144 288h6v6h-6zM150 300h6v6h-6zM150 306h6v6h-6zM156 312h6v6h-6zM162 318h6v6h-6zM168 324h6v6h-6zM174 330h12v6h-12zM186 336h12v6h-12zM210 342h24v6h-24zM54 348h6v6h-6zM288 348h200v6h-200zM72 384h6v6h-6zM96 408h6v6h-6zM114 420h6v6h-6zM150 432h6v6h-6zM186 438h6v6h-6z"/><path fill="#f05430" d="M6 246h6v6h-6zM6 252h6v6h-6z"/><path fill="#fccc3c" d="M12 246h6v6h-6zM12 252h6v6h-6zM18 342h6v6h-6zM24 372h6v6h-6zM30 390h6v6h-6zM132 462h6v6h-6zM198 468h6v6h-6z"/><path fill="#c0fc78" d="M18 252h6v6h-6zM18 258h6v6h-6zM48 408h6v6h-6zM72 432h6v6h-6zM138 456h6v6h-6zM198 462h6v6h-6z"/><path fill="#f0543c" d="M6 258h6v6h-6zM6 264h6v6h-6zM6 270h6v6h-6zM6 276h6v6h-6zM12 348h6v6h-6zM126 468h6v6h-6zM186 474h12v6h-12z"/><path fill="#fcc030" d="M12 258h6v6h-6zM12 264h6v6h-6zM12 270h6v6h-6zM12 276h6v6h-6zM186 468h12v6h-12z"/><path fill="#3ce4fc" d="M30 264h6v6h-6z"/><path fill="#486cfc" d="M138 264h6v6h-6zM144 294h6v6h-6zM156 318h6v6h-6zM162 324h6v6h-6zM168 330h6v6h-6zM66 372h6v6h-6zM78 390h6v6h-6zM84 396h6v6h-6zM90 402h6v6h-6zM132 426h6v6h-6z"/><path fill="#6cfccc" d="M24 270h6v6h-6zM24 276h6v6h-6zM30 336h6v6h-6zM114 444h6v6h-6zM138 450h6v6h-6zM192 456h6v6h-6z"/><path fill="#6cfce4" d="M204 270h6v6h-6zM210 276h6v6h-6z"/><path fill="#ccfc6c" d="M18 276h6v6h-6zM24 342h6v6h-6zM132 456h6v6h-6zM186 462h6v6h-6z"/><path fill="#3ca8fc" d="M36 276h6v6h-6zM36 282h6v6h-6zM144 438h6v6h-6zM186 444h12v6h-12z"/><path fill="#f0483c" d="M6 282h6v6h-6zM6 288h6v6h-6zM12 354h6v6h-6zM96 462h6v6h-6zM174 474h12v6h-12z"/><path fill="#fcb430" d="M12 282h6v6h-6zM12 288h6v6h-6zM18 348h6v6h-6zM174 468h12v6h-12z"/><path fill="#54f0fc" d="M30 282h6v6h-6zM30 288h6v6h-6zM30 294h6v6h-6zM72 414h6v6h-6zM174 450h6v6h-6zM186 450h6v6h-6z"/><path fill="#3c78fc" d="M42 282h6v6h-6zM444 444h44v6h-44z"/><path fill="#78fcc0" d="M24 288h6v6h-6zM30 342h6v6h-6zM180 456h6v6h-6z"/><path fill="#4848cc" d="M96 288h6v6h-6zM96 294h6v6h-6zM66 300h6v6h-6zM96 306h6v6h-6zM78 312h12v6h-12zM96 312h6v6h-6zM72 318h6v6h-6zM84 318h6v6h-6zM96 318h6v6h-6zM84 324h6v6h-6zM96 324h6v6h-6zM78 330h6v6h-6zM96 330h12v6h-12zM84 336h6v6h-6zM102 336h6v6h-6zM84 342h36v6h-36zM90 348h6v6h-6zM138 366h6v6h-6zM138 372h6v6h-6zM138 378h24v6h-24zM138 384h6v6h-6zM162 384h18v6h-18zM186 384h30v6h-30zM126 390h18v6h-18zM138 396h12v6h-12zM156 396h18v6h-18zM150 402h6v6h-6zM168 402h6v6h-6zM162 408h6v6h-6zM204 420h6v6h-6z"/><path fill="#60fcf0" d="M216 288h6v6h-6zM246 300h6v6h-6zM288 306h6v6h-6z"/><path fill="#e4483c" d="M6 294h6v6h-6zM6 300h6v6h-6zM6 306h6v6h-6zM12 360h6v6h-6zM18 384h6v6h-6zM24 402h6v6h-6zM30 414h6v6h-6zM66 450h6v6h-6zM78 456h6v6h-6zM120 468h6v6h-6zM162 474h12v6h-12z"/><path fill="#fca83c" d="M12 294h6v6h-6zM12 300h6v6h-6zM18 354h6v6h-6zM120 462h6v6h-6zM168 468h6v6h-6z"/><path fill="#d8fc54" d="M18 294h6v6h-6z"/><path fill="#48c0fc" d="M180 294h6v6h-6zM186 300h6v6h-6zM198 312h6v6h-6zM84 414h6v6h-6z"/><path fill="#e4fc54" d="M18 300h6v6h-6zM18 306h6v6h-6zM168 462h6v6h-6z"/><path fill="#90fca8" d="M24 306h6v6h-6zM90 438h6v6h-6zM162 456h6v6h-6z"/><path fill="#48fcf0" d="M30 306h6v6h-6zM30 312h6v6h-6zM36 348h6v6h-6zM42 372h6v6h-6zM108 438h6v6h-6zM162 450h6v6h-6zM276 456h6v6h-6zM312 456h114v6h-114z"/><path fill="#d8483c" d="M6 312h6v6h-6zM114 468h6v6h-6zM156 474h6v6h-6z"/><path fill="#f0f054" d="M18 312h6v6h-6zM120 456h6v6h-6zM156 462h6v6h-6z"/><path fill="#d83c3c" d="M6 318h6v6h-6zM90 462h6v6h-6z"/><path fill="#f0f048" d="M18 318h6v6h-6zM24 360h6v6h-6zM72 438h6v6h-6zM300 468h24v6h-24zM330 468h158v6h-158z"/><path fill="#9cfc9c" d="M24 318h6v6h-6zM48 402h6v6h-6zM102 444h6v6h-6zM156 456h6v6h-6zM300 462h96v6h-96z"/><path fill="#cc3c3c" d="M6 324h6v6h-6zM12 366h6v6h-6zM18 390h6v6h-6zM54 444h6v6h-6zM150 474h6v6h-6zM378 480h36v6h-36zM420 480h42v6h-42zM468 480h20v6h-20z"/><path fill="#fc843c" d="M12 324h6v6h-6zM18 366h6v6h-6zM30 402h6v6h-6zM36 414h6v6h-6zM66 444h6v6h-6zM90 456h6v6h-6zM144 468h12v6h-12zM330 474h36v6h-36zM372 474h116v6h-116z"/><path fill="#fc6c3c" d="M12 330h6v6h-6z"/><path fill="#fc543c" d="M12 342h6v6h-6zM18 378h6v6h-6zM24 396h6v6h-6zM36 420h6v6h-6zM84 456h6v6h-6zM102 462h6v6h-6z"/><path fill="#d8fc60" d="M24 348h6v6h-6zM174 462h6v6h-6z"/><path fill="#c03c3c" d="M12 372h6v6h-6zM108 468h6v6h-6zM144 474h6v6h-6zM324 480h54v6h-54zM414 480h6v6h-6zM462 480h6v6h-6z"/><path fill="#fc603c" d="M18 372h6v6h-6zM138 468h6v6h-6z"/><path fill="#fcb43c" d="M24 378h6v6h-6zM126 462h6v6h-6z"/><path fill="#fc783c" d="M24 390h6v6h-6zM108 462h6v6h-6zM324 474h6v6h-6zM366 474h6v6h-6z"/><path fill="#3c48fc" d="M414 438h30v6h-30z"/><path fill="#f0fc48" d="M84 444h6v6h-6z"/><path fill="#fcc03c" d="M102 456h6v6h-6z"/><path fill="#48f0f0" d="M426 456h62v6h-62z"/><path fill="#f0e448" d="M324 468h6v6h-6z"/><path fill="#fc6c30" d="M252 474h72v6h-72z"/><path fill="#6c1818" d="M0 486h6v1h-6z"/><path fill="#903c3c" d="M42 486h6v1h-6zM90 486h6v1h-6zM138 486h6v1h-6zM180 486h6v1h-6zM228 486h6v1h-6zM276 486h6v1h-6zM324 486h6v1h-6zM366 486h6v1h-6zM414 486h6v1h-6zM462 486h6v1h-6z"/></svg>
<canvas id="plot" class="a" style="left:0;top:0" width="800" height="591"></canvas>
<div id="bb" class="a"></div>
<svg id="traj" class="a" style="left:0;top:0" width="800" height="591"><defs><clipPath id="pc"><rect x="299" y="61" width="488" height="487"/></clipPath></defs><path id="tp" d="M379.0 181.0C379.0 189.2 378.9 210.2 379.0 230.0C379.1 249.8 379.2 283.3 379.5 300.0C379.8 316.7 380.2 321.3 380.5 330.0C380.8 338.7 381.0 342.8 381.5 352.0C382.0 361.2 382.6 376.1 383.4 385.0C384.2 393.9 385.0 398.5 386.4 405.3C387.8 412.1 389.3 418.2 391.5 425.6C393.7 433.1 396.7 442.6 399.6 450.0C402.5 457.4 405.8 464.6 408.7 470.3C411.6 476.1 414.5 481.4 416.9 484.5C419.3 487.6 420.9 488.6 422.9 488.6C424.9 488.6 427.0 487.2 429.0 484.5C431.0 481.8 432.7 478.1 435.1 472.3C437.5 466.6 440.1 457.8 443.2 450.0C446.2 442.2 450.0 433.7 453.4 425.6C456.8 417.5 460.7 407.2 463.6 401.2C466.5 395.2 468.6 392.4 470.6 389.8C472.6 387.2 473.7 386.4 475.5 385.3C477.3 384.2 479.7 383.3 481.4 383.3C483.1 383.3 484.6 384.0 485.8 385.2C487.0 386.4 487.6 388.0 488.5 390.5C489.4 393.0 490.4 396.1 491.5 400.0C492.6 403.9 492.6 405.9 495.0 414.1C497.4 422.3 502.2 438.0 505.8 449.3C509.4 460.6 513.7 472.6 516.6 481.8C519.5 491.1 522.0 500.5 523.4 504.8C524.8 509.1 525.2 508.2 524.7 507.5C524.2 506.8 523.4 506.0 520.7 500.8C518.0 495.6 513.7 486.3 508.5 476.4C503.3 466.5 494.7 450.6 489.6 441.2C484.5 431.8 482.3 426.9 478.1 420.0C473.9 413.1 468.8 405.4 464.6 399.5C460.4 393.6 457.0 389.1 452.8 384.3C448.6 379.5 444.3 375.3 439.2 370.8C434.1 366.3 428.8 362.4 422.3 357.2C415.8 352.0 407.1 344.5 400.0 339.4C392.9 334.3 385.8 330.5 379.7 326.7C373.6 322.9 368.4 319.7 363.5 316.5C358.6 313.3 353.9 310.1 350.3 307.4C346.8 304.7 343.9 302.3 342.2 300.5C340.4 298.7 339.9 297.6 339.8 296.5C339.7 295.4 340.4 294.4 341.4 293.9C342.3 293.4 342.3 293.3 345.5 293.6C348.7 293.9 354.8 294.5 360.5 295.5C366.2 296.5 373.9 298.2 379.7 299.6C385.4 301.1 390.3 303.2 395.0 304.2C399.7 305.2 403.5 305.0 407.7 305.6C411.9 306.2 416.2 307.7 420.4 308.1C424.6 308.5 429.4 308.5 433.1 308.1C436.8 307.7 440.4 306.7 442.4 305.6C444.4 304.5 444.9 303.1 444.9 301.4C444.9 299.7 444.1 297.6 442.4 295.5C440.7 293.4 437.8 291.1 434.8 288.7C431.8 286.3 428.4 283.9 424.6 281.1C420.8 278.3 415.7 274.5 411.9 271.8C408.1 269.1 407.3 268.6 401.8 265.0C396.3 261.4 386.3 255.5 378.7 250.3C371.1 245.1 362.5 238.4 356.4 234.0C350.3 229.6 345.3 226.6 342.2 223.9C339.1 221.2 338.2 219.5 338.0 218.0C337.8 216.5 338.3 214.9 341.0 215.0C343.7 215.1 348.1 217.2 354.4 218.8C360.7 220.5 370.9 222.9 378.7 224.9C386.5 226.9 393.3 229.1 401.1 231.0C408.9 232.9 419.3 235.2 425.4 236.1C431.5 236.9 434.9 236.8 437.6 236.1C440.3 235.4 441.7 234.0 441.7 232.0C441.7 230.0 441.0 227.3 437.6 223.9C434.2 220.5 427.5 216.1 421.4 211.7C415.3 207.3 408.2 202.6 401.1 197.5C394.0 192.4 386.1 186.6 378.7 181.2C371.2 175.8 362.5 169.8 356.4 165.0C350.3 160.2 345.3 155.4 342.2 152.5C339.1 149.6 338.4 148.7 338.0 147.4C337.6 146.1 337.3 144.5 340.0 144.5C342.7 144.5 347.6 145.7 354.4 147.4C361.2 149.1 371.3 152.1 380.8 154.5C390.3 156.9 402.8 159.6 411.2 161.6C419.6 163.6 426.8 165.6 431.5 166.3C436.2 167.0 438.1 167.0 439.6 165.7C441.1 164.4 442.1 161.1 440.7 158.6C439.3 156.1 436.4 154.1 431.5 150.4C426.6 146.7 418.0 141.3 411.2 136.2C404.4 131.1 397.7 125.4 390.9 120.0C384.1 114.6 377.4 109.1 370.6 103.7C363.8 98.3 355.6 91.7 350.3 87.5C345.1 83.3 341.2 80.4 339.1 78.4C337.1 76.4 337.7 76.1 338.0 75.3C338.3 74.5 337.9 73.2 341.0 73.5C344.1 73.8 349.8 75.6 356.4 77.3C363.0 79.0 372.3 81.2 380.8 83.4C389.3 85.6 399.5 88.6 407.2 90.5C414.9 92.4 422.4 93.9 427.1 94.6C431.8 95.3 433.1 95.0 435.2 94.5C437.3 94.0 439.0 92.9 439.9 91.8C440.8 90.7 440.9 89.1 440.6 87.8C440.3 86.5 439.6 85.5 437.9 83.7C436.2 81.9 432.9 79.0 430.5 76.9C428.1 74.8 425.8 72.8 423.7 70.9C421.6 69.0 419.4 66.9 417.6 65.4C415.9 63.9 413.9 62.3 413.2 61.7" fill="none" stroke="#000" stroke-width="4.3" stroke-linejoin="round" stroke-linecap="round"/></svg>

<script>
(function(){
var L=299,T=61,W=488,H=487;
var D=48.52161,re=1.48253,b=2.53561,d=0.33987,c3=0.29439,b3=1.72512,b2=1.58515,L1=-121.3187,CUT=-20;
function QJ(r){var e1=Math.exp(-b*(r-re)),e2=Math.exp(-2*b2*(r-re)),f1=Math.exp(-b3*(r-re)),f2=f1*f1;var E1=D*(e2-2*e1),E3=c3*D*(f2+2*f1);return [(E1*(1+d)+E3*(1-d))/2,(E1*(1+d)-E3*(1-d))/2];}
function V(x,y){var a=QJ(x),c=QJ(y),e=QJ(x+y);var ja=a[1],jb=c[1],jc=e[1];
 return (a[0]+c[0]+e[0]-Math.sqrt(0.5*((ja-jb)*(ja-jb)+(jb-jc)*(jb-jc)+(jc-ja)*(jc-ja))))/(1+d);}
var m=64,n=16,u=[],i,j,k;
for(i=1;i<=n;i++)u.push(i/n);for(i=1;i<n;i++)u.push(1);for(i=n;i>=1;i--)u.push(i/n);
var J=[];for(i=0;i<m;i++)J.push([0,0,0]);
for(k=0;k<u.length;k++){var g=8+k+1,rr=g+n,bb=g-n;
 if(rr>=1&&rr<=m)J[rr-1][0]=u[k]; if(g>=1&&g<=m)J[g-1][1]=u[k]; if(bb>=1&&bb<=m)J[bb-1][2]=u[k];}
var G=0.02,NX=106;
var vals=new Float64Array(NX*NX),vmin=1e9;
for(j=0;j<NX;j++)for(i=0;i<NX;i++){var v=V(0.4+i*G,0.4+j*G); if(v>CUT)v=CUT; vals[j*NX+i]=v; if(v<vmin)vmin=v;}
var vmax=CUT;
function px(x){return L+(x-0.4)/2.1*W} function py(y){return T+H-(y-0.4)/2.1*H}
var cnv=document.getElementById('plot');var ctx=cnv.getContext('2d');
// background white
ctx.fillStyle='#fff';ctx.fillRect(L,T,W,H);
// grid
ctx.strokeStyle='rgba(38,38,38,0.15)';ctx.lineWidth=1;ctx.beginPath();
var tk=[0.4,0.6,0.8,1,1.2,1.4,1.6,1.8,2,2.2,2.4];
for(i=0;i<tk.length;i++){var X=Math.floor(px(tk[i]))+0.5;ctx.moveTo(X,T);ctx.lineTo(X,T+H);var Y=Math.min(T+H-1,Math.floor(py(tk[i])))+0.5;ctx.moveTo(L,Y);ctx.lineTo(L+W,Y);}
ctx.stroke();
ctx.strokeStyle='#262626';ctx.beginPath();
for(i=0;i<tk.length;i++){var X2=Math.floor(px(tk[i]))+0.5;ctx.moveTo(X2,T+H);ctx.lineTo(X2,T+H-5);var Y2=Math.min(T+H-1,Math.floor(py(tk[i])))+0.5;ctx.moveTo(L,Y2);ctx.lineTo(L+5,Y2);}
ctx.stroke();
// surface
var A=0.7;
var img=ctx.getImageData(L,T,W,H),dd=img.data;
for(j=0;j<H;j++){var yy=2.5-(j+0.5)/H*2.1;var fy=(yy-0.4)/G;var jy=Math.floor(fy);if(jy>NX-2)jy=NX-2;if(jy<0)jy=0;var ty=fy-jy;
 for(i=0;i<W;i++){var xx=0.4+(i+0.5)/W*2.1;var fx=(xx-0.4)/G;var ix=Math.floor(fx);if(ix>NX-2)ix=NX-2;if(ix<0)ix=0;var tx=fx-ix;
  var v00=vals[jy*NX+ix],v10=vals[jy*NX+ix+1],v01=vals[(jy+1)*NX+ix],v11=vals[(jy+1)*NX+ix+1];
  var vv=(v00*(1-tx)+v10*tx)*(1-ty)+(v01*(1-tx)+v11*tx)*ty;
  var idx=Math.floor((vv-vmin)/(vmax-vmin)*m); if(idx<0)idx=0; if(idx>m-1)idx=m-1;
  var c=J[idx],o=(j*W+i)*4;
  dd[o]=c[0]*255*A+dd[o]*(1-A);dd[o+1]=c[1]*255*A+dd[o+1]*(1-A);dd[o+2]=c[2]*255*A+dd[o+2]*(1-A);}}
// contours (aliased, rasterized into image)
function plot(xi,yi,r,g,bl){if(xi<0||yi<0||xi>=W||yi>=H)return;var o=(yi*W+xi)*4;dd[o]=r;dd[o+1]=g;dd[o+2]=bl;}
function seg(ax,ay,bx,by,r,g,bl){ax=Math.floor(ax-L);ay=Math.floor(ay-T);bx=Math.floor(bx-L);by=Math.floor(by-T);
 var dx=Math.abs(bx-ax),sx=ax<bx?1:-1,dy=-Math.abs(by-ay),sy=ay<by?1:-1,err=dx+dy,n=0;
 while(n++<2000){plot(ax,ay,r,g,bl);if(ax===bx&&ay===by)break;var e2=2*err;if(e2>=dy){err+=dy;ax+=sx;}if(e2<=dx){err+=dx;ay+=sy;}}}
for(k=0;k<9;k++){var lv=L1+(CUT-L1)*k/8;
 var id=Math.floor((lv-vmin)/(vmax-vmin)*m); if(id<0)id=0; if(id>m-1)id=m-1; var cc=J[id];
 var cr=Math.round(cc[0]*255),cg=Math.round(cc[1]*255),cbl=Math.round(cc[2]*255);
 for(j=0;j<NX-1;j++)for(i=0;i<NX-1;i++){
  var a0=vals[j*NX+i],a1=vals[j*NX+i+1],a2=vals[(j+1)*NX+i+1],a3=vals[(j+1)*NX+i];
  var pts=[];var x0=0.4+i*G,y0=0.4+j*G,x1=x0+G,y1=y0+G;
  function ed(va,vb,xa,ya,xb,yb){ if((va<lv)!==(vb<lv)){var t=(lv-va)/(vb-va);pts.push([xa+(xb-xa)*t,ya+(yb-ya)*t]);}}
  ed(a0,a1,x0,y0,x1,y0);ed(a1,a2,x1,y0,x1,y1);ed(a2,a3,x1,y1,x0,y1);ed(a3,a0,x0,y1,x0,y0);
  if(pts.length>=2){seg(px(pts[0][0]),py(pts[0][1]),px(pts[1][0]),py(pts[1][1]),cr,cg,cbl);}
  if(pts.length==4){seg(px(pts[2][0]),py(pts[2][1]),px(pts[3][0]),py(pts[3][1]),cr,cg,cbl);}
 }
}
ctx.putImageData(img,L,T);
ctx.save();ctx.beginPath();ctx.rect(L,T,W,H);ctx.clip();
ctx.restore();
})();
</script>

</body></html>
